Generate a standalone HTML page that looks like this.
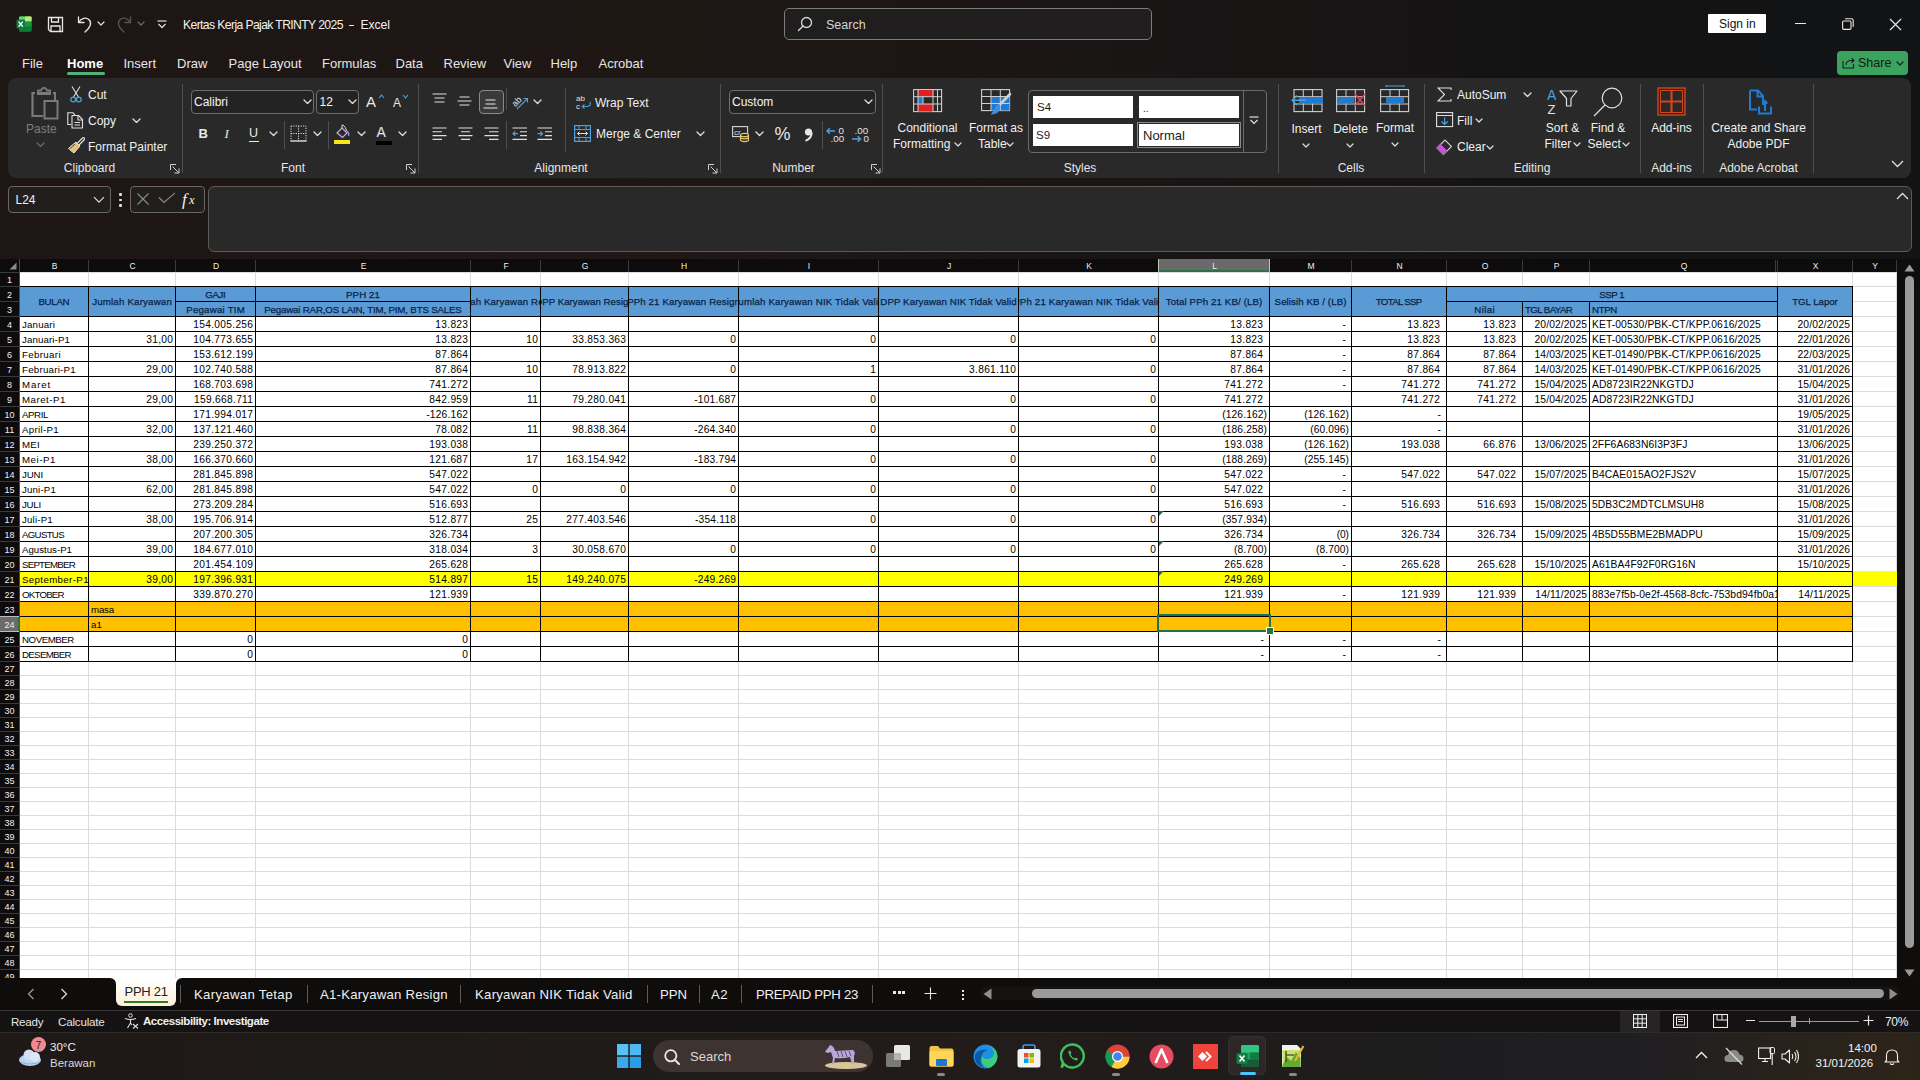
<!DOCTYPE html><html><head><meta charset="utf-8"><style>
*{box-sizing:content-box}
body{margin:0;width:1920px;height:1080px;overflow:hidden;position:relative;background:#1c1817;font-family:"Liberation Sans",sans-serif;}
.c{position:absolute;display:flex;align-items:flex-end;overflow:hidden;white-space:nowrap;font-size:9.7px;line-height:13px;letter-spacing:.5px}
.c span{display:block;flex:none}
.ch{position:absolute;top:259px;height:13px;line-height:14px;font-size:8.5px;color:#f0f0f0;text-align:center}
.rh{position:absolute;left:0;width:19px;font-size:9px;color:#f0f0f0;text-align:center;overflow:hidden}
.a{position:absolute;white-space:nowrap}
</style></head><body>
<div style="position:absolute;left:20px;top:272px;width:1877px;height:706px;background:#fff"></div>
<div style="position:absolute;left:19px;top:286px;width:1834px;height:30px;background:#5b9bd5"></div>
<div style="position:absolute;left:19px;top:571px;width:1878px;height:15px;background:#ffff00"></div>
<div style="position:absolute;left:19px;top:601px;width:1834px;height:30px;background:#ffc000"></div>
<div style="position:absolute;left:88px;top:272px;width:1px;height:706px;background:#dcdcdc"></div>
<div style="position:absolute;left:175px;top:272px;width:1px;height:706px;background:#dcdcdc"></div>
<div style="position:absolute;left:255px;top:272px;width:1px;height:706px;background:#dcdcdc"></div>
<div style="position:absolute;left:470px;top:272px;width:1px;height:706px;background:#dcdcdc"></div>
<div style="position:absolute;left:540px;top:272px;width:1px;height:706px;background:#dcdcdc"></div>
<div style="position:absolute;left:628px;top:272px;width:1px;height:706px;background:#dcdcdc"></div>
<div style="position:absolute;left:738px;top:272px;width:1px;height:706px;background:#dcdcdc"></div>
<div style="position:absolute;left:878px;top:272px;width:1px;height:706px;background:#dcdcdc"></div>
<div style="position:absolute;left:1018px;top:272px;width:1px;height:706px;background:#dcdcdc"></div>
<div style="position:absolute;left:1158px;top:272px;width:1px;height:706px;background:#dcdcdc"></div>
<div style="position:absolute;left:1269px;top:272px;width:1px;height:706px;background:#dcdcdc"></div>
<div style="position:absolute;left:1351px;top:272px;width:1px;height:706px;background:#dcdcdc"></div>
<div style="position:absolute;left:1446px;top:272px;width:1px;height:706px;background:#dcdcdc"></div>
<div style="position:absolute;left:1522px;top:272px;width:1px;height:706px;background:#dcdcdc"></div>
<div style="position:absolute;left:1589px;top:272px;width:1px;height:706px;background:#dcdcdc"></div>
<div style="position:absolute;left:1777px;top:272px;width:1px;height:706px;background:#dcdcdc"></div>
<div style="position:absolute;left:1852px;top:272px;width:1px;height:706px;background:#dcdcdc"></div>
<div style="position:absolute;left:1896px;top:272px;width:1px;height:706px;background:#dcdcdc"></div>
<div style="position:absolute;left:20px;top:272px;width:1877px;height:1px;background:#dcdcdc"></div>
<div style="position:absolute;left:20px;top:286px;width:1877px;height:1px;background:#dcdcdc"></div>
<div style="position:absolute;left:20px;top:301px;width:1877px;height:1px;background:#dcdcdc"></div>
<div style="position:absolute;left:20px;top:316px;width:1877px;height:1px;background:#dcdcdc"></div>
<div style="position:absolute;left:20px;top:331px;width:1877px;height:1px;background:#dcdcdc"></div>
<div style="position:absolute;left:20px;top:346px;width:1877px;height:1px;background:#dcdcdc"></div>
<div style="position:absolute;left:20px;top:361px;width:1877px;height:1px;background:#dcdcdc"></div>
<div style="position:absolute;left:20px;top:376px;width:1877px;height:1px;background:#dcdcdc"></div>
<div style="position:absolute;left:20px;top:391px;width:1877px;height:1px;background:#dcdcdc"></div>
<div style="position:absolute;left:20px;top:406px;width:1877px;height:1px;background:#dcdcdc"></div>
<div style="position:absolute;left:20px;top:421px;width:1877px;height:1px;background:#dcdcdc"></div>
<div style="position:absolute;left:20px;top:436px;width:1877px;height:1px;background:#dcdcdc"></div>
<div style="position:absolute;left:20px;top:451px;width:1877px;height:1px;background:#dcdcdc"></div>
<div style="position:absolute;left:20px;top:466px;width:1877px;height:1px;background:#dcdcdc"></div>
<div style="position:absolute;left:20px;top:481px;width:1877px;height:1px;background:#dcdcdc"></div>
<div style="position:absolute;left:20px;top:496px;width:1877px;height:1px;background:#dcdcdc"></div>
<div style="position:absolute;left:20px;top:511px;width:1877px;height:1px;background:#dcdcdc"></div>
<div style="position:absolute;left:20px;top:526px;width:1877px;height:1px;background:#dcdcdc"></div>
<div style="position:absolute;left:20px;top:541px;width:1877px;height:1px;background:#dcdcdc"></div>
<div style="position:absolute;left:20px;top:556px;width:1877px;height:1px;background:#dcdcdc"></div>
<div style="position:absolute;left:20px;top:571px;width:1877px;height:1px;background:#dcdcdc"></div>
<div style="position:absolute;left:20px;top:586px;width:1877px;height:1px;background:#dcdcdc"></div>
<div style="position:absolute;left:20px;top:601px;width:1877px;height:1px;background:#dcdcdc"></div>
<div style="position:absolute;left:20px;top:616px;width:1877px;height:1px;background:#dcdcdc"></div>
<div style="position:absolute;left:20px;top:631px;width:1877px;height:1px;background:#dcdcdc"></div>
<div style="position:absolute;left:20px;top:646px;width:1877px;height:1px;background:#dcdcdc"></div>
<div style="position:absolute;left:20px;top:661px;width:1877px;height:1px;background:#dcdcdc"></div>
<div style="position:absolute;left:20px;top:675px;width:1877px;height:1px;background:#dcdcdc"></div>
<div style="position:absolute;left:20px;top:689px;width:1877px;height:1px;background:#dcdcdc"></div>
<div style="position:absolute;left:20px;top:703px;width:1877px;height:1px;background:#dcdcdc"></div>
<div style="position:absolute;left:20px;top:717px;width:1877px;height:1px;background:#dcdcdc"></div>
<div style="position:absolute;left:20px;top:731px;width:1877px;height:1px;background:#dcdcdc"></div>
<div style="position:absolute;left:20px;top:745px;width:1877px;height:1px;background:#dcdcdc"></div>
<div style="position:absolute;left:20px;top:759px;width:1877px;height:1px;background:#dcdcdc"></div>
<div style="position:absolute;left:20px;top:773px;width:1877px;height:1px;background:#dcdcdc"></div>
<div style="position:absolute;left:20px;top:787px;width:1877px;height:1px;background:#dcdcdc"></div>
<div style="position:absolute;left:20px;top:801px;width:1877px;height:1px;background:#dcdcdc"></div>
<div style="position:absolute;left:20px;top:815px;width:1877px;height:1px;background:#dcdcdc"></div>
<div style="position:absolute;left:20px;top:829px;width:1877px;height:1px;background:#dcdcdc"></div>
<div style="position:absolute;left:20px;top:843px;width:1877px;height:1px;background:#dcdcdc"></div>
<div style="position:absolute;left:20px;top:857px;width:1877px;height:1px;background:#dcdcdc"></div>
<div style="position:absolute;left:20px;top:871px;width:1877px;height:1px;background:#dcdcdc"></div>
<div style="position:absolute;left:20px;top:885px;width:1877px;height:1px;background:#dcdcdc"></div>
<div style="position:absolute;left:20px;top:899px;width:1877px;height:1px;background:#dcdcdc"></div>
<div style="position:absolute;left:20px;top:913px;width:1877px;height:1px;background:#dcdcdc"></div>
<div style="position:absolute;left:20px;top:927px;width:1877px;height:1px;background:#dcdcdc"></div>
<div style="position:absolute;left:20px;top:941px;width:1877px;height:1px;background:#dcdcdc"></div>
<div style="position:absolute;left:20px;top:955px;width:1877px;height:1px;background:#dcdcdc"></div>
<div style="position:absolute;left:20px;top:969px;width:1877px;height:1px;background:#dcdcdc"></div>
<div style="position:absolute;left:19px;top:286px;width:1834px;height:30px;background:#5b9bd5"></div>
<div style="position:absolute;left:19px;top:571px;width:1878px;height:15px;background:#ffff00"></div>
<div style="position:absolute;left:19px;top:601px;width:1834px;height:30px;background:#ffc000"></div>
<div style="position:absolute;left:19px;top:286px;width:1834px;height:1px;background:#000"></div>
<div style="position:absolute;left:175px;top:301px;width:296px;height:1px;background:#000"></div>
<div style="position:absolute;left:1446px;top:301px;width:332px;height:1px;background:#000"></div>
<div style="position:absolute;left:19px;top:316px;width:1834px;height:1px;background:#000"></div>
<div style="position:absolute;left:19px;top:331px;width:1834px;height:1px;background:#000"></div>
<div style="position:absolute;left:19px;top:346px;width:1834px;height:1px;background:#000"></div>
<div style="position:absolute;left:19px;top:361px;width:1834px;height:1px;background:#000"></div>
<div style="position:absolute;left:19px;top:376px;width:1834px;height:1px;background:#000"></div>
<div style="position:absolute;left:19px;top:391px;width:1834px;height:1px;background:#000"></div>
<div style="position:absolute;left:19px;top:406px;width:1834px;height:1px;background:#000"></div>
<div style="position:absolute;left:19px;top:421px;width:1834px;height:1px;background:#000"></div>
<div style="position:absolute;left:19px;top:436px;width:1834px;height:1px;background:#000"></div>
<div style="position:absolute;left:19px;top:451px;width:1834px;height:1px;background:#000"></div>
<div style="position:absolute;left:19px;top:466px;width:1834px;height:1px;background:#000"></div>
<div style="position:absolute;left:19px;top:481px;width:1834px;height:1px;background:#000"></div>
<div style="position:absolute;left:19px;top:496px;width:1834px;height:1px;background:#000"></div>
<div style="position:absolute;left:19px;top:511px;width:1834px;height:1px;background:#000"></div>
<div style="position:absolute;left:19px;top:526px;width:1834px;height:1px;background:#000"></div>
<div style="position:absolute;left:19px;top:541px;width:1834px;height:1px;background:#000"></div>
<div style="position:absolute;left:19px;top:556px;width:1834px;height:1px;background:#000"></div>
<div style="position:absolute;left:19px;top:571px;width:1834px;height:1px;background:#000"></div>
<div style="position:absolute;left:19px;top:586px;width:1834px;height:1px;background:#000"></div>
<div style="position:absolute;left:19px;top:601px;width:1834px;height:1px;background:#000"></div>
<div style="position:absolute;left:19px;top:616px;width:1834px;height:1px;background:#000"></div>
<div style="position:absolute;left:19px;top:631px;width:1834px;height:1px;background:#000"></div>
<div style="position:absolute;left:19px;top:646px;width:1834px;height:1px;background:#000"></div>
<div style="position:absolute;left:19px;top:661px;width:1834px;height:1px;background:#000"></div>
<div style="position:absolute;left:88px;top:286px;width:1px;height:376px;background:#000"></div>
<div style="position:absolute;left:175px;top:286px;width:1px;height:376px;background:#000"></div>
<div style="position:absolute;left:255px;top:286px;width:1px;height:376px;background:#000"></div>
<div style="position:absolute;left:470px;top:286px;width:1px;height:376px;background:#000"></div>
<div style="position:absolute;left:540px;top:286px;width:1px;height:376px;background:#000"></div>
<div style="position:absolute;left:628px;top:286px;width:1px;height:376px;background:#000"></div>
<div style="position:absolute;left:738px;top:286px;width:1px;height:376px;background:#000"></div>
<div style="position:absolute;left:878px;top:286px;width:1px;height:376px;background:#000"></div>
<div style="position:absolute;left:1018px;top:286px;width:1px;height:376px;background:#000"></div>
<div style="position:absolute;left:1158px;top:286px;width:1px;height:376px;background:#000"></div>
<div style="position:absolute;left:1269px;top:286px;width:1px;height:376px;background:#000"></div>
<div style="position:absolute;left:1351px;top:286px;width:1px;height:376px;background:#000"></div>
<div style="position:absolute;left:1446px;top:286px;width:1px;height:376px;background:#000"></div>
<div style="position:absolute;left:1522px;top:301px;width:1px;height:361px;background:#000"></div>
<div style="position:absolute;left:1589px;top:301px;width:1px;height:361px;background:#000"></div>
<div style="position:absolute;left:1777px;top:286px;width:1px;height:376px;background:#000"></div>
<div style="position:absolute;left:1852px;top:286px;width:1px;height:376px;background:#000"></div>
<div style="position:absolute;left:19px;top:286px;width:1px;height:376px;background:#000"></div>
<div class="c" style="left:20px;top:287px;width:68px;height:29px;justify-content:center;color:#0a1f46;align-items:center;-webkit-text-stroke:0.25px #0a1f46"><span style="letter-spacing:-0.27px;margin-right:0.27px">BULAN</span></div>
<div class="c" style="left:89px;top:287px;width:86px;height:29px;justify-content:center;color:#0a1f46;align-items:center;-webkit-text-stroke:0.25px #0a1f46"><span style="letter-spacing:0.19px;margin-right:-0.19px">Jumlah Karyawan</span></div>
<div class="c" style="left:176px;top:287px;width:79px;height:14px;justify-content:center;color:#0a1f46;align-items:center;-webkit-text-stroke:0.25px #0a1f46"><span style="letter-spacing:-0.39px;margin-right:0.39px">GAJI</span></div>
<div class="c" style="left:176px;top:302px;width:79px;height:14px;justify-content:center;color:#0a1f46;align-items:center;-webkit-text-stroke:0.25px #0a1f46"><span style="letter-spacing:0.22px;margin-right:-0.22px">Pegawai TIM</span></div>
<div class="c" style="left:256px;top:287px;width:214px;height:14px;justify-content:center;color:#0a1f46;align-items:center;-webkit-text-stroke:0.25px #0a1f46"><span style="letter-spacing:0.10px;margin-right:-0.10px">PPH 21</span></div>
<div class="c" style="left:256px;top:302px;width:214px;height:14px;justify-content:center;color:#0a1f46;align-items:center;-webkit-text-stroke:0.25px #0a1f46"><span style="letter-spacing:-0.16px;margin-right:0.16px">Pegawai RAR,OS LAIN, TIM, PIM, BTS SALES</span></div>
<div class="c" style="left:471px;top:287px;width:69px;height:29px;justify-content:center;color:#0a1f46;align-items:center;-webkit-text-stroke:0.25px #0a1f46"><span style="letter-spacing:0.14px;margin-right:-0.14px">Jumlah Karyawan Resign</span></div>
<div class="c" style="left:541px;top:287px;width:87px;height:29px;justify-content:center;color:#0a1f46;align-items:center;-webkit-text-stroke:0.25px #0a1f46"><span style="letter-spacing:0.02px;margin-right:-0.02px">DPP Karyawan Resign</span></div>
<div class="c" style="left:629px;top:287px;width:109px;height:29px;justify-content:center;color:#0a1f46;align-items:center;-webkit-text-stroke:0.25px #0a1f46"><span style="letter-spacing:0.11px;margin-right:-0.11px">PPh 21 Karyawan Resign</span></div>
<div class="c" style="left:739px;top:287px;width:139px;height:29px;justify-content:center;color:#0a1f46;align-items:center;-webkit-text-stroke:0.25px #0a1f46"><span style="letter-spacing:0.17px;margin-right:-0.17px">Jumlah Karyawan NIK Tidak Valid</span></div>
<div class="c" style="left:879px;top:287px;width:139px;height:29px;justify-content:center;color:#0a1f46;align-items:center;-webkit-text-stroke:0.25px #0a1f46"><span style="letter-spacing:0.10px;margin-right:-0.10px">DPP Karyawan NIK Tidak Valid</span></div>
<div class="c" style="left:1019px;top:287px;width:139px;height:29px;justify-content:center;color:#0a1f46;align-items:center;-webkit-text-stroke:0.25px #0a1f46"><span style="letter-spacing:0.16px;margin-right:-0.16px">PPh 21 Karyawan NIK Tidak Valid</span></div>
<div class="c" style="left:1159px;top:287px;width:110px;height:29px;justify-content:center;color:#0a1f46;align-items:center;-webkit-text-stroke:0.25px #0a1f46"><span style="letter-spacing:0.12px;margin-right:-0.12px">Total PPh 21 KB/ (LB)</span></div>
<div class="c" style="left:1270px;top:287px;width:81px;height:29px;justify-content:center;color:#0a1f46;align-items:center;-webkit-text-stroke:0.25px #0a1f46"><span style="letter-spacing:0.08px;margin-right:-0.08px">Selisih KB / (LB)</span></div>
<div class="c" style="left:1352px;top:287px;width:94px;height:29px;justify-content:center;color:#0a1f46;align-items:center;-webkit-text-stroke:0.25px #0a1f46"><span style="letter-spacing:-0.71px;margin-right:0.71px">TOTAL SSP</span></div>
<div class="c" style="left:1447px;top:287px;width:330px;height:14px;justify-content:center;color:#0a1f46;align-items:center;-webkit-text-stroke:0.25px #0a1f46"><span style="letter-spacing:-0.50px;margin-right:0.50px">SSP 1</span></div>
<div class="c" style="left:1447px;top:302px;width:75px;height:14px;justify-content:center;color:#0a1f46;align-items:center;-webkit-text-stroke:0.25px #0a1f46"><span style="letter-spacing:0.43px;margin-right:-0.43px">Nilai</span></div>
<div class="c" style="left:1523px;top:302px;width:64px;height:14px;justify-content:flex-start;padding-left:2px;color:#0a1f46;align-items:center;-webkit-text-stroke:0.25px #0a1f46"><span style="letter-spacing:-0.60px;margin-right:0.60px">TGL BAYAR</span></div>
<div class="c" style="left:1590px;top:302px;width:185px;height:14px;justify-content:flex-start;padding-left:2px;color:#0a1f46;align-items:center;-webkit-text-stroke:0.25px #0a1f46"><span style="letter-spacing:-0.35px;margin-right:0.35px">NTPN</span></div>
<div class="c" style="left:1778px;top:287px;width:74px;height:29px;justify-content:center;color:#0a1f46;align-items:center;-webkit-text-stroke:0.25px #0a1f46"><span style="letter-spacing:-0.04px;margin-right:0.04px">TGL Lapor</span></div>
<div class="c" style="left:20px;top:317px;width:66px;height:14px;justify-content:flex-start;padding-left:2px;color:#000"><span style="letter-spacing:0.17px;margin-right:-0.17px">Januari</span></div>
<div class="c" style="left:176px;top:317px;width:77px;height:14px;justify-content:flex-end;padding-right:2px;color:#000;font-size:10.2px"><span style="letter-spacing:0.30px;margin-right:-0.30px">154.005.256</span></div>
<div class="c" style="left:256px;top:317px;width:212px;height:14px;justify-content:flex-end;padding-right:2px;color:#000;font-size:10.2px"><span style="letter-spacing:0.30px;margin-right:-0.30px">13.823</span></div>
<div class="c" style="left:1159px;top:317px;width:104px;height:14px;justify-content:flex-end;padding-right:6px;color:#000;font-size:10.2px"><span style="letter-spacing:0.30px;margin-right:-0.30px">13.823</span></div>
<div class="c" style="left:1270px;top:317px;width:76px;height:14px;justify-content:flex-end;padding-right:5px;color:#000;font-size:10.2px"><span style="letter-spacing:-0.40px;margin-right:0.40px">-</span></div>
<div class="c" style="left:1352px;top:317px;width:88px;height:14px;justify-content:flex-end;padding-right:6px;color:#000;font-size:10.2px"><span style="letter-spacing:0.30px;margin-right:-0.30px">13.823</span></div>
<div class="c" style="left:1447px;top:317px;width:69px;height:14px;justify-content:flex-end;padding-right:6px;color:#000;font-size:10.2px"><span style="letter-spacing:0.30px;margin-right:-0.30px">13.823</span></div>
<div class="c" style="left:1523px;top:317px;width:64px;height:14px;justify-content:flex-end;padding-right:2px;color:#000;font-size:10.3px"><span style="letter-spacing:0.10px;margin-right:-0.10px">20/02/2025</span></div>
<div class="c" style="left:1590px;top:317px;width:185px;height:14px;justify-content:flex-start;padding-left:2px;color:#000;font-size:10.3px"><span style="letter-spacing:0.10px;margin-right:-0.10px">KET-00530/PBK-CT/KPP.0616/2025</span></div>
<div class="c" style="left:1778px;top:317px;width:72px;height:14px;justify-content:flex-end;padding-right:2px;color:#000;font-size:10.3px"><span style="letter-spacing:0.10px;margin-right:-0.10px">20/02/2025</span></div>
<div class="c" style="left:20px;top:332px;width:66px;height:14px;justify-content:flex-start;padding-left:2px;color:#000"><span style="letter-spacing:0.11px;margin-right:-0.11px">Januari-P1</span></div>
<div class="c" style="left:89px;top:332px;width:84px;height:14px;justify-content:flex-end;padding-right:2px;color:#000;font-size:10.2px"><span style="letter-spacing:0.30px;margin-right:-0.30px">31,00</span></div>
<div class="c" style="left:176px;top:332px;width:77px;height:14px;justify-content:flex-end;padding-right:2px;color:#000;font-size:10.2px"><span style="letter-spacing:0.30px;margin-right:-0.30px">104.773.655</span></div>
<div class="c" style="left:256px;top:332px;width:212px;height:14px;justify-content:flex-end;padding-right:2px;color:#000;font-size:10.2px"><span style="letter-spacing:0.30px;margin-right:-0.30px">13.823</span></div>
<div class="c" style="left:471px;top:332px;width:67px;height:14px;justify-content:flex-end;padding-right:2px;color:#000;font-size:10.2px"><span style="letter-spacing:0.33px;margin-right:-0.33px">10</span></div>
<div class="c" style="left:541px;top:332px;width:85px;height:14px;justify-content:flex-end;padding-right:2px;color:#000;font-size:10.2px"><span style="letter-spacing:0.30px;margin-right:-0.30px">33.853.363</span></div>
<div class="c" style="left:629px;top:332px;width:107px;height:14px;justify-content:flex-end;padding-right:2px;color:#000;font-size:10.2px"><span style="letter-spacing:0.33px;margin-right:-0.33px">0</span></div>
<div class="c" style="left:739px;top:332px;width:137px;height:14px;justify-content:flex-end;padding-right:2px;color:#000;font-size:10.2px"><span style="letter-spacing:0.33px;margin-right:-0.33px">0</span></div>
<div class="c" style="left:879px;top:332px;width:137px;height:14px;justify-content:flex-end;padding-right:2px;color:#000;font-size:10.2px"><span style="letter-spacing:0.33px;margin-right:-0.33px">0</span></div>
<div class="c" style="left:1019px;top:332px;width:137px;height:14px;justify-content:flex-end;padding-right:2px;color:#000;font-size:10.2px"><span style="letter-spacing:0.33px;margin-right:-0.33px">0</span></div>
<div class="c" style="left:1159px;top:332px;width:104px;height:14px;justify-content:flex-end;padding-right:6px;color:#000;font-size:10.2px"><span style="letter-spacing:0.30px;margin-right:-0.30px">13.823</span></div>
<div class="c" style="left:1270px;top:332px;width:76px;height:14px;justify-content:flex-end;padding-right:5px;color:#000;font-size:10.2px"><span style="letter-spacing:-0.40px;margin-right:0.40px">-</span></div>
<div class="c" style="left:1352px;top:332px;width:88px;height:14px;justify-content:flex-end;padding-right:6px;color:#000;font-size:10.2px"><span style="letter-spacing:0.30px;margin-right:-0.30px">13.823</span></div>
<div class="c" style="left:1447px;top:332px;width:69px;height:14px;justify-content:flex-end;padding-right:6px;color:#000;font-size:10.2px"><span style="letter-spacing:0.30px;margin-right:-0.30px">13.823</span></div>
<div class="c" style="left:1523px;top:332px;width:64px;height:14px;justify-content:flex-end;padding-right:2px;color:#000;font-size:10.3px"><span style="letter-spacing:0.10px;margin-right:-0.10px">20/02/2025</span></div>
<div class="c" style="left:1590px;top:332px;width:185px;height:14px;justify-content:flex-start;padding-left:2px;color:#000;font-size:10.3px"><span style="letter-spacing:0.10px;margin-right:-0.10px">KET-00530/PBK-CT/KPP.0616/2025</span></div>
<div class="c" style="left:1778px;top:332px;width:72px;height:14px;justify-content:flex-end;padding-right:2px;color:#000;font-size:10.3px"><span style="letter-spacing:0.10px;margin-right:-0.10px">22/01/2026</span></div>
<div class="c" style="left:20px;top:347px;width:66px;height:14px;justify-content:flex-start;padding-left:2px;color:#000"><span style="letter-spacing:0.36px;margin-right:-0.36px">Februari</span></div>
<div class="c" style="left:176px;top:347px;width:77px;height:14px;justify-content:flex-end;padding-right:2px;color:#000;font-size:10.2px"><span style="letter-spacing:0.30px;margin-right:-0.30px">153.612.199</span></div>
<div class="c" style="left:256px;top:347px;width:212px;height:14px;justify-content:flex-end;padding-right:2px;color:#000;font-size:10.2px"><span style="letter-spacing:0.30px;margin-right:-0.30px">87.864</span></div>
<div class="c" style="left:1159px;top:347px;width:104px;height:14px;justify-content:flex-end;padding-right:6px;color:#000;font-size:10.2px"><span style="letter-spacing:0.30px;margin-right:-0.30px">87.864</span></div>
<div class="c" style="left:1270px;top:347px;width:76px;height:14px;justify-content:flex-end;padding-right:5px;color:#000;font-size:10.2px"><span style="letter-spacing:-0.40px;margin-right:0.40px">-</span></div>
<div class="c" style="left:1352px;top:347px;width:88px;height:14px;justify-content:flex-end;padding-right:6px;color:#000;font-size:10.2px"><span style="letter-spacing:0.30px;margin-right:-0.30px">87.864</span></div>
<div class="c" style="left:1447px;top:347px;width:69px;height:14px;justify-content:flex-end;padding-right:6px;color:#000;font-size:10.2px"><span style="letter-spacing:0.30px;margin-right:-0.30px">87.864</span></div>
<div class="c" style="left:1523px;top:347px;width:64px;height:14px;justify-content:flex-end;padding-right:2px;color:#000;font-size:10.3px"><span style="letter-spacing:0.10px;margin-right:-0.10px">14/03/2025</span></div>
<div class="c" style="left:1590px;top:347px;width:185px;height:14px;justify-content:flex-start;padding-left:2px;color:#000;font-size:10.3px"><span style="letter-spacing:0.10px;margin-right:-0.10px">KET-01490/PBK-CT/KPP.0616/2025</span></div>
<div class="c" style="left:1778px;top:347px;width:72px;height:14px;justify-content:flex-end;padding-right:2px;color:#000;font-size:10.3px"><span style="letter-spacing:0.10px;margin-right:-0.10px">22/03/2025</span></div>
<div class="c" style="left:20px;top:362px;width:66px;height:14px;justify-content:flex-start;padding-left:2px;color:#000"><span style="letter-spacing:0.25px;margin-right:-0.25px">Februari-P1</span></div>
<div class="c" style="left:89px;top:362px;width:84px;height:14px;justify-content:flex-end;padding-right:2px;color:#000;font-size:10.2px"><span style="letter-spacing:0.30px;margin-right:-0.30px">29,00</span></div>
<div class="c" style="left:176px;top:362px;width:77px;height:14px;justify-content:flex-end;padding-right:2px;color:#000;font-size:10.2px"><span style="letter-spacing:0.30px;margin-right:-0.30px">102.740.588</span></div>
<div class="c" style="left:256px;top:362px;width:212px;height:14px;justify-content:flex-end;padding-right:2px;color:#000;font-size:10.2px"><span style="letter-spacing:0.30px;margin-right:-0.30px">87.864</span></div>
<div class="c" style="left:471px;top:362px;width:67px;height:14px;justify-content:flex-end;padding-right:2px;color:#000;font-size:10.2px"><span style="letter-spacing:0.33px;margin-right:-0.33px">10</span></div>
<div class="c" style="left:541px;top:362px;width:85px;height:14px;justify-content:flex-end;padding-right:2px;color:#000;font-size:10.2px"><span style="letter-spacing:0.30px;margin-right:-0.30px">78.913.822</span></div>
<div class="c" style="left:629px;top:362px;width:107px;height:14px;justify-content:flex-end;padding-right:2px;color:#000;font-size:10.2px"><span style="letter-spacing:0.33px;margin-right:-0.33px">0</span></div>
<div class="c" style="left:739px;top:362px;width:137px;height:14px;justify-content:flex-end;padding-right:2px;color:#000;font-size:10.2px"><span style="letter-spacing:0.33px;margin-right:-0.33px">1</span></div>
<div class="c" style="left:879px;top:362px;width:137px;height:14px;justify-content:flex-end;padding-right:2px;color:#000;font-size:10.2px"><span style="letter-spacing:0.29px;margin-right:-0.29px">3.861.110</span></div>
<div class="c" style="left:1019px;top:362px;width:137px;height:14px;justify-content:flex-end;padding-right:2px;color:#000;font-size:10.2px"><span style="letter-spacing:0.33px;margin-right:-0.33px">0</span></div>
<div class="c" style="left:1159px;top:362px;width:104px;height:14px;justify-content:flex-end;padding-right:6px;color:#000;font-size:10.2px"><span style="letter-spacing:0.30px;margin-right:-0.30px">87.864</span></div>
<div class="c" style="left:1270px;top:362px;width:76px;height:14px;justify-content:flex-end;padding-right:5px;color:#000;font-size:10.2px"><span style="letter-spacing:-0.40px;margin-right:0.40px">-</span></div>
<div class="c" style="left:1352px;top:362px;width:88px;height:14px;justify-content:flex-end;padding-right:6px;color:#000;font-size:10.2px"><span style="letter-spacing:0.30px;margin-right:-0.30px">87.864</span></div>
<div class="c" style="left:1447px;top:362px;width:69px;height:14px;justify-content:flex-end;padding-right:6px;color:#000;font-size:10.2px"><span style="letter-spacing:0.30px;margin-right:-0.30px">87.864</span></div>
<div class="c" style="left:1523px;top:362px;width:64px;height:14px;justify-content:flex-end;padding-right:2px;color:#000;font-size:10.3px"><span style="letter-spacing:0.10px;margin-right:-0.10px">14/03/2025</span></div>
<div class="c" style="left:1590px;top:362px;width:185px;height:14px;justify-content:flex-start;padding-left:2px;color:#000;font-size:10.3px"><span style="letter-spacing:0.10px;margin-right:-0.10px">KET-01490/PBK-CT/KPP.0616/2025</span></div>
<div class="c" style="left:1778px;top:362px;width:72px;height:14px;justify-content:flex-end;padding-right:2px;color:#000;font-size:10.3px"><span style="letter-spacing:0.10px;margin-right:-0.10px">31/01/2026</span></div>
<div class="c" style="left:20px;top:377px;width:66px;height:14px;justify-content:flex-start;padding-left:2px;color:#000"><span style="letter-spacing:0.84px;margin-right:-0.84px">Maret</span></div>
<div class="c" style="left:176px;top:377px;width:77px;height:14px;justify-content:flex-end;padding-right:2px;color:#000;font-size:10.2px"><span style="letter-spacing:0.30px;margin-right:-0.30px">168.703.698</span></div>
<div class="c" style="left:256px;top:377px;width:212px;height:14px;justify-content:flex-end;padding-right:2px;color:#000;font-size:10.2px"><span style="letter-spacing:0.30px;margin-right:-0.30px">741.272</span></div>
<div class="c" style="left:1159px;top:377px;width:104px;height:14px;justify-content:flex-end;padding-right:6px;color:#000;font-size:10.2px"><span style="letter-spacing:0.30px;margin-right:-0.30px">741.272</span></div>
<div class="c" style="left:1270px;top:377px;width:76px;height:14px;justify-content:flex-end;padding-right:5px;color:#000;font-size:10.2px"><span style="letter-spacing:-0.40px;margin-right:0.40px">-</span></div>
<div class="c" style="left:1352px;top:377px;width:88px;height:14px;justify-content:flex-end;padding-right:6px;color:#000;font-size:10.2px"><span style="letter-spacing:0.30px;margin-right:-0.30px">741.272</span></div>
<div class="c" style="left:1447px;top:377px;width:69px;height:14px;justify-content:flex-end;padding-right:6px;color:#000;font-size:10.2px"><span style="letter-spacing:0.30px;margin-right:-0.30px">741.272</span></div>
<div class="c" style="left:1523px;top:377px;width:64px;height:14px;justify-content:flex-end;padding-right:2px;color:#000;font-size:10.3px"><span style="letter-spacing:0.10px;margin-right:-0.10px">15/04/2025</span></div>
<div class="c" style="left:1590px;top:377px;width:185px;height:14px;justify-content:flex-start;padding-left:2px;color:#000;font-size:10.3px"><span style="letter-spacing:0.10px;margin-right:-0.10px">AD8723IR22NKGTDJ</span></div>
<div class="c" style="left:1778px;top:377px;width:72px;height:14px;justify-content:flex-end;padding-right:2px;color:#000;font-size:10.3px"><span style="letter-spacing:0.10px;margin-right:-0.10px">15/04/2025</span></div>
<div class="c" style="left:20px;top:392px;width:66px;height:14px;justify-content:flex-start;padding-left:2px;color:#000"><span style="letter-spacing:0.51px;margin-right:-0.51px">Maret-P1</span></div>
<div class="c" style="left:89px;top:392px;width:84px;height:14px;justify-content:flex-end;padding-right:2px;color:#000;font-size:10.2px"><span style="letter-spacing:0.30px;margin-right:-0.30px">29,00</span></div>
<div class="c" style="left:176px;top:392px;width:77px;height:14px;justify-content:flex-end;padding-right:2px;color:#000;font-size:10.2px"><span style="letter-spacing:0.30px;margin-right:-0.30px">159.668.711</span></div>
<div class="c" style="left:256px;top:392px;width:212px;height:14px;justify-content:flex-end;padding-right:2px;color:#000;font-size:10.2px"><span style="letter-spacing:0.30px;margin-right:-0.30px">842.959</span></div>
<div class="c" style="left:471px;top:392px;width:67px;height:14px;justify-content:flex-end;padding-right:2px;color:#000;font-size:10.2px"><span style="letter-spacing:0.33px;margin-right:-0.33px">11</span></div>
<div class="c" style="left:541px;top:392px;width:85px;height:14px;justify-content:flex-end;padding-right:2px;color:#000;font-size:10.2px"><span style="letter-spacing:0.30px;margin-right:-0.30px">79.280.041</span></div>
<div class="c" style="left:629px;top:392px;width:107px;height:14px;justify-content:flex-end;padding-right:2px;color:#000;font-size:10.2px"><span style="letter-spacing:0.22px;margin-right:-0.22px">-101.687</span></div>
<div class="c" style="left:739px;top:392px;width:137px;height:14px;justify-content:flex-end;padding-right:2px;color:#000;font-size:10.2px"><span style="letter-spacing:0.33px;margin-right:-0.33px">0</span></div>
<div class="c" style="left:879px;top:392px;width:137px;height:14px;justify-content:flex-end;padding-right:2px;color:#000;font-size:10.2px"><span style="letter-spacing:0.33px;margin-right:-0.33px">0</span></div>
<div class="c" style="left:1019px;top:392px;width:137px;height:14px;justify-content:flex-end;padding-right:2px;color:#000;font-size:10.2px"><span style="letter-spacing:0.33px;margin-right:-0.33px">0</span></div>
<div class="c" style="left:1159px;top:392px;width:104px;height:14px;justify-content:flex-end;padding-right:6px;color:#000;font-size:10.2px"><span style="letter-spacing:0.30px;margin-right:-0.30px">741.272</span></div>
<div class="c" style="left:1352px;top:392px;width:88px;height:14px;justify-content:flex-end;padding-right:6px;color:#000;font-size:10.2px"><span style="letter-spacing:0.30px;margin-right:-0.30px">741.272</span></div>
<div class="c" style="left:1447px;top:392px;width:69px;height:14px;justify-content:flex-end;padding-right:6px;color:#000;font-size:10.2px"><span style="letter-spacing:0.30px;margin-right:-0.30px">741.272</span></div>
<div class="c" style="left:1523px;top:392px;width:64px;height:14px;justify-content:flex-end;padding-right:2px;color:#000;font-size:10.3px"><span style="letter-spacing:0.10px;margin-right:-0.10px">15/04/2025</span></div>
<div class="c" style="left:1590px;top:392px;width:185px;height:14px;justify-content:flex-start;padding-left:2px;color:#000;font-size:10.3px"><span style="letter-spacing:0.10px;margin-right:-0.10px">AD8723IR22NKGTDJ</span></div>
<div class="c" style="left:1778px;top:392px;width:72px;height:14px;justify-content:flex-end;padding-right:2px;color:#000;font-size:10.3px"><span style="letter-spacing:0.10px;margin-right:-0.10px">31/01/2026</span></div>
<div class="c" style="left:20px;top:407px;width:66px;height:14px;justify-content:flex-start;padding-left:2px;color:#000"><span style="letter-spacing:-0.41px;margin-right:0.41px">APRIL</span></div>
<div class="c" style="left:176px;top:407px;width:77px;height:14px;justify-content:flex-end;padding-right:2px;color:#000;font-size:10.2px"><span style="letter-spacing:0.30px;margin-right:-0.30px">171.994.017</span></div>
<div class="c" style="left:256px;top:407px;width:212px;height:14px;justify-content:flex-end;padding-right:2px;color:#000;font-size:10.2px"><span style="letter-spacing:0.22px;margin-right:-0.22px">-126.162</span></div>
<div class="c" style="left:1159px;top:407px;width:108px;height:14px;justify-content:flex-end;padding-right:2px;color:#000;font-size:10.2px"><span style="letter-spacing:0.15px;margin-right:-0.15px">(126.162)</span></div>
<div class="c" style="left:1270px;top:407px;width:79px;height:14px;justify-content:flex-end;padding-right:2px;color:#000;font-size:10.2px"><span style="letter-spacing:0.15px;margin-right:-0.15px">(126.162)</span></div>
<div class="c" style="left:1352px;top:407px;width:89px;height:14px;justify-content:flex-end;padding-right:5px;color:#000;font-size:10.2px"><span style="letter-spacing:-0.40px;margin-right:0.40px">-</span></div>
<div class="c" style="left:1778px;top:407px;width:72px;height:14px;justify-content:flex-end;padding-right:2px;color:#000;font-size:10.3px"><span style="letter-spacing:0.10px;margin-right:-0.10px">19/05/2025</span></div>
<div class="c" style="left:20px;top:422px;width:66px;height:14px;justify-content:flex-start;padding-left:2px;color:#000"><span style="letter-spacing:0.31px;margin-right:-0.31px">April-P1</span></div>
<div class="c" style="left:89px;top:422px;width:84px;height:14px;justify-content:flex-end;padding-right:2px;color:#000;font-size:10.2px"><span style="letter-spacing:0.30px;margin-right:-0.30px">32,00</span></div>
<div class="c" style="left:176px;top:422px;width:77px;height:14px;justify-content:flex-end;padding-right:2px;color:#000;font-size:10.2px"><span style="letter-spacing:0.30px;margin-right:-0.30px">137.121.460</span></div>
<div class="c" style="left:256px;top:422px;width:212px;height:14px;justify-content:flex-end;padding-right:2px;color:#000;font-size:10.2px"><span style="letter-spacing:0.30px;margin-right:-0.30px">78.082</span></div>
<div class="c" style="left:471px;top:422px;width:67px;height:14px;justify-content:flex-end;padding-right:2px;color:#000;font-size:10.2px"><span style="letter-spacing:0.33px;margin-right:-0.33px">11</span></div>
<div class="c" style="left:541px;top:422px;width:85px;height:14px;justify-content:flex-end;padding-right:2px;color:#000;font-size:10.2px"><span style="letter-spacing:0.30px;margin-right:-0.30px">98.838.364</span></div>
<div class="c" style="left:629px;top:422px;width:107px;height:14px;justify-content:flex-end;padding-right:2px;color:#000;font-size:10.2px"><span style="letter-spacing:0.22px;margin-right:-0.22px">-264.340</span></div>
<div class="c" style="left:739px;top:422px;width:137px;height:14px;justify-content:flex-end;padding-right:2px;color:#000;font-size:10.2px"><span style="letter-spacing:0.33px;margin-right:-0.33px">0</span></div>
<div class="c" style="left:879px;top:422px;width:137px;height:14px;justify-content:flex-end;padding-right:2px;color:#000;font-size:10.2px"><span style="letter-spacing:0.33px;margin-right:-0.33px">0</span></div>
<div class="c" style="left:1019px;top:422px;width:137px;height:14px;justify-content:flex-end;padding-right:2px;color:#000;font-size:10.2px"><span style="letter-spacing:0.33px;margin-right:-0.33px">0</span></div>
<div class="c" style="left:1159px;top:422px;width:108px;height:14px;justify-content:flex-end;padding-right:2px;color:#000;font-size:10.2px"><span style="letter-spacing:0.15px;margin-right:-0.15px">(186.258)</span></div>
<div class="c" style="left:1270px;top:422px;width:79px;height:14px;justify-content:flex-end;padding-right:2px;color:#000;font-size:10.2px"><span style="letter-spacing:0.13px;margin-right:-0.13px">(60.096)</span></div>
<div class="c" style="left:1352px;top:422px;width:89px;height:14px;justify-content:flex-end;padding-right:5px;color:#000;font-size:10.2px"><span style="letter-spacing:-0.40px;margin-right:0.40px">-</span></div>
<div class="c" style="left:1778px;top:422px;width:72px;height:14px;justify-content:flex-end;padding-right:2px;color:#000;font-size:10.3px"><span style="letter-spacing:0.10px;margin-right:-0.10px">31/01/2026</span></div>
<div class="c" style="left:20px;top:437px;width:66px;height:14px;justify-content:flex-start;padding-left:2px;color:#000"><span style="letter-spacing:0.25px;margin-right:-0.25px">MEI</span></div>
<div class="c" style="left:176px;top:437px;width:77px;height:14px;justify-content:flex-end;padding-right:2px;color:#000;font-size:10.2px"><span style="letter-spacing:0.30px;margin-right:-0.30px">239.250.372</span></div>
<div class="c" style="left:256px;top:437px;width:212px;height:14px;justify-content:flex-end;padding-right:2px;color:#000;font-size:10.2px"><span style="letter-spacing:0.30px;margin-right:-0.30px">193.038</span></div>
<div class="c" style="left:1159px;top:437px;width:104px;height:14px;justify-content:flex-end;padding-right:6px;color:#000;font-size:10.2px"><span style="letter-spacing:0.30px;margin-right:-0.30px">193.038</span></div>
<div class="c" style="left:1270px;top:437px;width:79px;height:14px;justify-content:flex-end;padding-right:2px;color:#000;font-size:10.2px"><span style="letter-spacing:0.15px;margin-right:-0.15px">(126.162)</span></div>
<div class="c" style="left:1352px;top:437px;width:88px;height:14px;justify-content:flex-end;padding-right:6px;color:#000;font-size:10.2px"><span style="letter-spacing:0.30px;margin-right:-0.30px">193.038</span></div>
<div class="c" style="left:1447px;top:437px;width:69px;height:14px;justify-content:flex-end;padding-right:6px;color:#000;font-size:10.2px"><span style="letter-spacing:0.30px;margin-right:-0.30px">66.876</span></div>
<div class="c" style="left:1523px;top:437px;width:64px;height:14px;justify-content:flex-end;padding-right:2px;color:#000;font-size:10.3px"><span style="letter-spacing:0.10px;margin-right:-0.10px">13/06/2025</span></div>
<div class="c" style="left:1590px;top:437px;width:185px;height:14px;justify-content:flex-start;padding-left:2px;color:#000;font-size:10.3px"><span style="letter-spacing:0.10px;margin-right:-0.10px">2FF6A683N6I3P3FJ</span></div>
<div class="c" style="left:1778px;top:437px;width:72px;height:14px;justify-content:flex-end;padding-right:2px;color:#000;font-size:10.3px"><span style="letter-spacing:0.10px;margin-right:-0.10px">13/06/2025</span></div>
<div class="c" style="left:20px;top:452px;width:66px;height:14px;justify-content:flex-start;padding-left:2px;color:#000"><span style="letter-spacing:0.55px;margin-right:-0.55px">Mei-P1</span></div>
<div class="c" style="left:89px;top:452px;width:84px;height:14px;justify-content:flex-end;padding-right:2px;color:#000;font-size:10.2px"><span style="letter-spacing:0.30px;margin-right:-0.30px">38,00</span></div>
<div class="c" style="left:176px;top:452px;width:77px;height:14px;justify-content:flex-end;padding-right:2px;color:#000;font-size:10.2px"><span style="letter-spacing:0.30px;margin-right:-0.30px">166.370.660</span></div>
<div class="c" style="left:256px;top:452px;width:212px;height:14px;justify-content:flex-end;padding-right:2px;color:#000;font-size:10.2px"><span style="letter-spacing:0.30px;margin-right:-0.30px">121.687</span></div>
<div class="c" style="left:471px;top:452px;width:67px;height:14px;justify-content:flex-end;padding-right:2px;color:#000;font-size:10.2px"><span style="letter-spacing:0.33px;margin-right:-0.33px">17</span></div>
<div class="c" style="left:541px;top:452px;width:85px;height:14px;justify-content:flex-end;padding-right:2px;color:#000;font-size:10.2px"><span style="letter-spacing:0.30px;margin-right:-0.30px">163.154.942</span></div>
<div class="c" style="left:629px;top:452px;width:107px;height:14px;justify-content:flex-end;padding-right:2px;color:#000;font-size:10.2px"><span style="letter-spacing:0.22px;margin-right:-0.22px">-183.794</span></div>
<div class="c" style="left:739px;top:452px;width:137px;height:14px;justify-content:flex-end;padding-right:2px;color:#000;font-size:10.2px"><span style="letter-spacing:0.33px;margin-right:-0.33px">0</span></div>
<div class="c" style="left:879px;top:452px;width:137px;height:14px;justify-content:flex-end;padding-right:2px;color:#000;font-size:10.2px"><span style="letter-spacing:0.33px;margin-right:-0.33px">0</span></div>
<div class="c" style="left:1019px;top:452px;width:137px;height:14px;justify-content:flex-end;padding-right:2px;color:#000;font-size:10.2px"><span style="letter-spacing:0.33px;margin-right:-0.33px">0</span></div>
<div class="c" style="left:1159px;top:452px;width:108px;height:14px;justify-content:flex-end;padding-right:2px;color:#000;font-size:10.2px"><span style="letter-spacing:0.15px;margin-right:-0.15px">(188.269)</span></div>
<div class="c" style="left:1270px;top:452px;width:79px;height:14px;justify-content:flex-end;padding-right:2px;color:#000;font-size:10.2px"><span style="letter-spacing:0.15px;margin-right:-0.15px">(255.145)</span></div>
<div class="c" style="left:1778px;top:452px;width:72px;height:14px;justify-content:flex-end;padding-right:2px;color:#000;font-size:10.3px"><span style="letter-spacing:0.10px;margin-right:-0.10px">31/01/2026</span></div>
<div class="c" style="left:20px;top:467px;width:66px;height:14px;justify-content:flex-start;padding-left:2px;color:#000"><span style="letter-spacing:-0.14px;margin-right:0.14px">JUNI</span></div>
<div class="c" style="left:176px;top:467px;width:77px;height:14px;justify-content:flex-end;padding-right:2px;color:#000;font-size:10.2px"><span style="letter-spacing:0.30px;margin-right:-0.30px">281.845.898</span></div>
<div class="c" style="left:256px;top:467px;width:212px;height:14px;justify-content:flex-end;padding-right:2px;color:#000;font-size:10.2px"><span style="letter-spacing:0.30px;margin-right:-0.30px">547.022</span></div>
<div class="c" style="left:1159px;top:467px;width:104px;height:14px;justify-content:flex-end;padding-right:6px;color:#000;font-size:10.2px"><span style="letter-spacing:0.30px;margin-right:-0.30px">547.022</span></div>
<div class="c" style="left:1270px;top:467px;width:76px;height:14px;justify-content:flex-end;padding-right:5px;color:#000;font-size:10.2px"><span style="letter-spacing:-0.40px;margin-right:0.40px">-</span></div>
<div class="c" style="left:1352px;top:467px;width:88px;height:14px;justify-content:flex-end;padding-right:6px;color:#000;font-size:10.2px"><span style="letter-spacing:0.30px;margin-right:-0.30px">547.022</span></div>
<div class="c" style="left:1447px;top:467px;width:69px;height:14px;justify-content:flex-end;padding-right:6px;color:#000;font-size:10.2px"><span style="letter-spacing:0.30px;margin-right:-0.30px">547.022</span></div>
<div class="c" style="left:1523px;top:467px;width:64px;height:14px;justify-content:flex-end;padding-right:2px;color:#000;font-size:10.3px"><span style="letter-spacing:0.10px;margin-right:-0.10px">15/07/2025</span></div>
<div class="c" style="left:1590px;top:467px;width:185px;height:14px;justify-content:flex-start;padding-left:2px;color:#000;font-size:10.3px"><span style="letter-spacing:0.10px;margin-right:-0.10px">B4CAE015AO2FJS2V</span></div>
<div class="c" style="left:1778px;top:467px;width:72px;height:14px;justify-content:flex-end;padding-right:2px;color:#000;font-size:10.3px"><span style="letter-spacing:0.10px;margin-right:-0.10px">15/07/2025</span></div>
<div class="c" style="left:20px;top:482px;width:66px;height:14px;justify-content:flex-start;padding-left:2px;color:#000"><span style="letter-spacing:0.16px;margin-right:-0.16px">Juni-P1</span></div>
<div class="c" style="left:89px;top:482px;width:84px;height:14px;justify-content:flex-end;padding-right:2px;color:#000;font-size:10.2px"><span style="letter-spacing:0.30px;margin-right:-0.30px">62,00</span></div>
<div class="c" style="left:176px;top:482px;width:77px;height:14px;justify-content:flex-end;padding-right:2px;color:#000;font-size:10.2px"><span style="letter-spacing:0.30px;margin-right:-0.30px">281.845.898</span></div>
<div class="c" style="left:256px;top:482px;width:212px;height:14px;justify-content:flex-end;padding-right:2px;color:#000;font-size:10.2px"><span style="letter-spacing:0.30px;margin-right:-0.30px">547.022</span></div>
<div class="c" style="left:471px;top:482px;width:67px;height:14px;justify-content:flex-end;padding-right:2px;color:#000;font-size:10.2px"><span style="letter-spacing:0.33px;margin-right:-0.33px">0</span></div>
<div class="c" style="left:541px;top:482px;width:85px;height:14px;justify-content:flex-end;padding-right:2px;color:#000;font-size:10.2px"><span style="letter-spacing:0.33px;margin-right:-0.33px">0</span></div>
<div class="c" style="left:629px;top:482px;width:107px;height:14px;justify-content:flex-end;padding-right:2px;color:#000;font-size:10.2px"><span style="letter-spacing:0.33px;margin-right:-0.33px">0</span></div>
<div class="c" style="left:739px;top:482px;width:137px;height:14px;justify-content:flex-end;padding-right:2px;color:#000;font-size:10.2px"><span style="letter-spacing:0.33px;margin-right:-0.33px">0</span></div>
<div class="c" style="left:879px;top:482px;width:137px;height:14px;justify-content:flex-end;padding-right:2px;color:#000;font-size:10.2px"><span style="letter-spacing:0.33px;margin-right:-0.33px">0</span></div>
<div class="c" style="left:1019px;top:482px;width:137px;height:14px;justify-content:flex-end;padding-right:2px;color:#000;font-size:10.2px"><span style="letter-spacing:0.33px;margin-right:-0.33px">0</span></div>
<div class="c" style="left:1159px;top:482px;width:104px;height:14px;justify-content:flex-end;padding-right:6px;color:#000;font-size:10.2px"><span style="letter-spacing:0.30px;margin-right:-0.30px">547.022</span></div>
<div class="c" style="left:1270px;top:482px;width:76px;height:14px;justify-content:flex-end;padding-right:5px;color:#000;font-size:10.2px"><span style="letter-spacing:-0.40px;margin-right:0.40px">-</span></div>
<div class="c" style="left:1778px;top:482px;width:72px;height:14px;justify-content:flex-end;padding-right:2px;color:#000;font-size:10.3px"><span style="letter-spacing:0.10px;margin-right:-0.10px">31/01/2026</span></div>
<div class="c" style="left:20px;top:497px;width:66px;height:14px;justify-content:flex-start;padding-left:2px;color:#000"><span style="letter-spacing:-0.24px;margin-right:0.24px">JULI</span></div>
<div class="c" style="left:176px;top:497px;width:77px;height:14px;justify-content:flex-end;padding-right:2px;color:#000;font-size:10.2px"><span style="letter-spacing:0.30px;margin-right:-0.30px">273.209.284</span></div>
<div class="c" style="left:256px;top:497px;width:212px;height:14px;justify-content:flex-end;padding-right:2px;color:#000;font-size:10.2px"><span style="letter-spacing:0.30px;margin-right:-0.30px">516.693</span></div>
<div class="c" style="left:1159px;top:497px;width:104px;height:14px;justify-content:flex-end;padding-right:6px;color:#000;font-size:10.2px"><span style="letter-spacing:0.30px;margin-right:-0.30px">516.693</span></div>
<div class="c" style="left:1270px;top:497px;width:76px;height:14px;justify-content:flex-end;padding-right:5px;color:#000;font-size:10.2px"><span style="letter-spacing:-0.40px;margin-right:0.40px">-</span></div>
<div class="c" style="left:1352px;top:497px;width:88px;height:14px;justify-content:flex-end;padding-right:6px;color:#000;font-size:10.2px"><span style="letter-spacing:0.30px;margin-right:-0.30px">516.693</span></div>
<div class="c" style="left:1447px;top:497px;width:69px;height:14px;justify-content:flex-end;padding-right:6px;color:#000;font-size:10.2px"><span style="letter-spacing:0.30px;margin-right:-0.30px">516.693</span></div>
<div class="c" style="left:1523px;top:497px;width:64px;height:14px;justify-content:flex-end;padding-right:2px;color:#000;font-size:10.3px"><span style="letter-spacing:0.10px;margin-right:-0.10px">15/08/2025</span></div>
<div class="c" style="left:1590px;top:497px;width:185px;height:14px;justify-content:flex-start;padding-left:2px;color:#000;font-size:10.3px"><span style="letter-spacing:0.10px;margin-right:-0.10px">5DB3C2MDTCLMSUH8</span></div>
<div class="c" style="left:1778px;top:497px;width:72px;height:14px;justify-content:flex-end;padding-right:2px;color:#000;font-size:10.3px"><span style="letter-spacing:0.10px;margin-right:-0.10px">15/08/2025</span></div>
<div class="c" style="left:20px;top:512px;width:66px;height:14px;justify-content:flex-start;padding-left:2px;color:#000"><span style="letter-spacing:0.19px;margin-right:-0.19px">Juli-P1</span></div>
<div class="c" style="left:89px;top:512px;width:84px;height:14px;justify-content:flex-end;padding-right:2px;color:#000;font-size:10.2px"><span style="letter-spacing:0.30px;margin-right:-0.30px">38,00</span></div>
<div class="c" style="left:176px;top:512px;width:77px;height:14px;justify-content:flex-end;padding-right:2px;color:#000;font-size:10.2px"><span style="letter-spacing:0.30px;margin-right:-0.30px">195.706.914</span></div>
<div class="c" style="left:256px;top:512px;width:212px;height:14px;justify-content:flex-end;padding-right:2px;color:#000;font-size:10.2px"><span style="letter-spacing:0.30px;margin-right:-0.30px">512.877</span></div>
<div class="c" style="left:471px;top:512px;width:67px;height:14px;justify-content:flex-end;padding-right:2px;color:#000;font-size:10.2px"><span style="letter-spacing:0.33px;margin-right:-0.33px">25</span></div>
<div class="c" style="left:541px;top:512px;width:85px;height:14px;justify-content:flex-end;padding-right:2px;color:#000;font-size:10.2px"><span style="letter-spacing:0.30px;margin-right:-0.30px">277.403.546</span></div>
<div class="c" style="left:629px;top:512px;width:107px;height:14px;justify-content:flex-end;padding-right:2px;color:#000;font-size:10.2px"><span style="letter-spacing:0.22px;margin-right:-0.22px">-354.118</span></div>
<div class="c" style="left:739px;top:512px;width:137px;height:14px;justify-content:flex-end;padding-right:2px;color:#000;font-size:10.2px"><span style="letter-spacing:0.33px;margin-right:-0.33px">0</span></div>
<div class="c" style="left:879px;top:512px;width:137px;height:14px;justify-content:flex-end;padding-right:2px;color:#000;font-size:10.2px"><span style="letter-spacing:0.33px;margin-right:-0.33px">0</span></div>
<div class="c" style="left:1019px;top:512px;width:137px;height:14px;justify-content:flex-end;padding-right:2px;color:#000;font-size:10.2px"><span style="letter-spacing:0.33px;margin-right:-0.33px">0</span></div>
<div class="c" style="left:1159px;top:512px;width:108px;height:14px;justify-content:flex-end;padding-right:2px;color:#000;font-size:10.2px"><span style="letter-spacing:0.15px;margin-right:-0.15px">(357.934)</span></div>
<div class="c" style="left:1778px;top:512px;width:72px;height:14px;justify-content:flex-end;padding-right:2px;color:#000;font-size:10.3px"><span style="letter-spacing:0.10px;margin-right:-0.10px">31/01/2026</span></div>
<div class="c" style="left:20px;top:527px;width:66px;height:14px;justify-content:flex-start;padding-left:2px;color:#000"><span style="letter-spacing:-0.70px;margin-right:0.70px">AGUSTUS</span></div>
<div class="c" style="left:176px;top:527px;width:77px;height:14px;justify-content:flex-end;padding-right:2px;color:#000;font-size:10.2px"><span style="letter-spacing:0.30px;margin-right:-0.30px">207.200.305</span></div>
<div class="c" style="left:256px;top:527px;width:212px;height:14px;justify-content:flex-end;padding-right:2px;color:#000;font-size:10.2px"><span style="letter-spacing:0.30px;margin-right:-0.30px">326.734</span></div>
<div class="c" style="left:1159px;top:527px;width:104px;height:14px;justify-content:flex-end;padding-right:6px;color:#000;font-size:10.2px"><span style="letter-spacing:0.30px;margin-right:-0.30px">326.734</span></div>
<div class="c" style="left:1270px;top:527px;width:79px;height:14px;justify-content:flex-end;padding-right:2px;color:#000;font-size:10.2px"><span style="letter-spacing:-0.16px;margin-right:0.16px">(0)</span></div>
<div class="c" style="left:1352px;top:527px;width:88px;height:14px;justify-content:flex-end;padding-right:6px;color:#000;font-size:10.2px"><span style="letter-spacing:0.30px;margin-right:-0.30px">326.734</span></div>
<div class="c" style="left:1447px;top:527px;width:69px;height:14px;justify-content:flex-end;padding-right:6px;color:#000;font-size:10.2px"><span style="letter-spacing:0.30px;margin-right:-0.30px">326.734</span></div>
<div class="c" style="left:1523px;top:527px;width:64px;height:14px;justify-content:flex-end;padding-right:2px;color:#000;font-size:10.3px"><span style="letter-spacing:0.10px;margin-right:-0.10px">15/09/2025</span></div>
<div class="c" style="left:1590px;top:527px;width:185px;height:14px;justify-content:flex-start;padding-left:2px;color:#000;font-size:10.3px"><span style="letter-spacing:0.10px;margin-right:-0.10px">4B5D55BME2BMADPU</span></div>
<div class="c" style="left:1778px;top:527px;width:72px;height:14px;justify-content:flex-end;padding-right:2px;color:#000;font-size:10.3px"><span style="letter-spacing:0.10px;margin-right:-0.10px">15/09/2025</span></div>
<div class="c" style="left:20px;top:542px;width:66px;height:14px;justify-content:flex-start;padding-left:2px;color:#000"><span style="letter-spacing:-0.01px;margin-right:0.01px">Agustus-P1</span></div>
<div class="c" style="left:89px;top:542px;width:84px;height:14px;justify-content:flex-end;padding-right:2px;color:#000;font-size:10.2px"><span style="letter-spacing:0.30px;margin-right:-0.30px">39,00</span></div>
<div class="c" style="left:176px;top:542px;width:77px;height:14px;justify-content:flex-end;padding-right:2px;color:#000;font-size:10.2px"><span style="letter-spacing:0.30px;margin-right:-0.30px">184.677.010</span></div>
<div class="c" style="left:256px;top:542px;width:212px;height:14px;justify-content:flex-end;padding-right:2px;color:#000;font-size:10.2px"><span style="letter-spacing:0.30px;margin-right:-0.30px">318.034</span></div>
<div class="c" style="left:471px;top:542px;width:67px;height:14px;justify-content:flex-end;padding-right:2px;color:#000;font-size:10.2px"><span style="letter-spacing:0.33px;margin-right:-0.33px">3</span></div>
<div class="c" style="left:541px;top:542px;width:85px;height:14px;justify-content:flex-end;padding-right:2px;color:#000;font-size:10.2px"><span style="letter-spacing:0.30px;margin-right:-0.30px">30.058.670</span></div>
<div class="c" style="left:629px;top:542px;width:107px;height:14px;justify-content:flex-end;padding-right:2px;color:#000;font-size:10.2px"><span style="letter-spacing:0.33px;margin-right:-0.33px">0</span></div>
<div class="c" style="left:739px;top:542px;width:137px;height:14px;justify-content:flex-end;padding-right:2px;color:#000;font-size:10.2px"><span style="letter-spacing:0.33px;margin-right:-0.33px">0</span></div>
<div class="c" style="left:879px;top:542px;width:137px;height:14px;justify-content:flex-end;padding-right:2px;color:#000;font-size:10.2px"><span style="letter-spacing:0.33px;margin-right:-0.33px">0</span></div>
<div class="c" style="left:1019px;top:542px;width:137px;height:14px;justify-content:flex-end;padding-right:2px;color:#000;font-size:10.2px"><span style="letter-spacing:0.33px;margin-right:-0.33px">0</span></div>
<div class="c" style="left:1159px;top:542px;width:108px;height:14px;justify-content:flex-end;padding-right:2px;color:#000;font-size:10.2px"><span style="letter-spacing:0.10px;margin-right:-0.10px">(8.700)</span></div>
<div class="c" style="left:1270px;top:542px;width:79px;height:14px;justify-content:flex-end;padding-right:2px;color:#000;font-size:10.2px"><span style="letter-spacing:0.10px;margin-right:-0.10px">(8.700)</span></div>
<div class="c" style="left:1778px;top:542px;width:72px;height:14px;justify-content:flex-end;padding-right:2px;color:#000;font-size:10.3px"><span style="letter-spacing:0.10px;margin-right:-0.10px">31/01/2026</span></div>
<div class="c" style="left:20px;top:557px;width:66px;height:14px;justify-content:flex-start;padding-left:2px;color:#000"><span style="letter-spacing:-0.76px;margin-right:0.76px">SEPTEMBER</span></div>
<div class="c" style="left:176px;top:557px;width:77px;height:14px;justify-content:flex-end;padding-right:2px;color:#000;font-size:10.2px"><span style="letter-spacing:0.30px;margin-right:-0.30px">201.454.109</span></div>
<div class="c" style="left:256px;top:557px;width:212px;height:14px;justify-content:flex-end;padding-right:2px;color:#000;font-size:10.2px"><span style="letter-spacing:0.30px;margin-right:-0.30px">265.628</span></div>
<div class="c" style="left:1159px;top:557px;width:104px;height:14px;justify-content:flex-end;padding-right:6px;color:#000;font-size:10.2px"><span style="letter-spacing:0.30px;margin-right:-0.30px">265.628</span></div>
<div class="c" style="left:1270px;top:557px;width:76px;height:14px;justify-content:flex-end;padding-right:5px;color:#000;font-size:10.2px"><span style="letter-spacing:-0.40px;margin-right:0.40px">-</span></div>
<div class="c" style="left:1352px;top:557px;width:88px;height:14px;justify-content:flex-end;padding-right:6px;color:#000;font-size:10.2px"><span style="letter-spacing:0.30px;margin-right:-0.30px">265.628</span></div>
<div class="c" style="left:1447px;top:557px;width:69px;height:14px;justify-content:flex-end;padding-right:6px;color:#000;font-size:10.2px"><span style="letter-spacing:0.30px;margin-right:-0.30px">265.628</span></div>
<div class="c" style="left:1523px;top:557px;width:64px;height:14px;justify-content:flex-end;padding-right:2px;color:#000;font-size:10.3px"><span style="letter-spacing:0.10px;margin-right:-0.10px">15/10/2025</span></div>
<div class="c" style="left:1590px;top:557px;width:185px;height:14px;justify-content:flex-start;padding-left:2px;color:#000;font-size:10.3px"><span style="letter-spacing:0.10px;margin-right:-0.10px">A61BA4F92F0RG16N</span></div>
<div class="c" style="left:1778px;top:557px;width:72px;height:14px;justify-content:flex-end;padding-right:2px;color:#000;font-size:10.3px"><span style="letter-spacing:0.10px;margin-right:-0.10px">15/10/2025</span></div>
<div class="c" style="left:20px;top:572px;width:66px;height:14px;justify-content:flex-start;padding-left:2px;color:#000"><span style="letter-spacing:0.37px;margin-right:-0.37px">September-P1</span></div>
<div class="c" style="left:89px;top:572px;width:84px;height:14px;justify-content:flex-end;padding-right:2px;color:#000;font-size:10.2px"><span style="letter-spacing:0.30px;margin-right:-0.30px">39,00</span></div>
<div class="c" style="left:176px;top:572px;width:77px;height:14px;justify-content:flex-end;padding-right:2px;color:#000;font-size:10.2px"><span style="letter-spacing:0.30px;margin-right:-0.30px">197.396.931</span></div>
<div class="c" style="left:256px;top:572px;width:212px;height:14px;justify-content:flex-end;padding-right:2px;color:#000;font-size:10.2px"><span style="letter-spacing:0.30px;margin-right:-0.30px">514.897</span></div>
<div class="c" style="left:471px;top:572px;width:67px;height:14px;justify-content:flex-end;padding-right:2px;color:#000;font-size:10.2px"><span style="letter-spacing:0.33px;margin-right:-0.33px">15</span></div>
<div class="c" style="left:541px;top:572px;width:85px;height:14px;justify-content:flex-end;padding-right:2px;color:#000;font-size:10.2px"><span style="letter-spacing:0.30px;margin-right:-0.30px">149.240.075</span></div>
<div class="c" style="left:629px;top:572px;width:107px;height:14px;justify-content:flex-end;padding-right:2px;color:#000;font-size:10.2px"><span style="letter-spacing:0.22px;margin-right:-0.22px">-249.269</span></div>
<div class="c" style="left:1159px;top:572px;width:104px;height:14px;justify-content:flex-end;padding-right:6px;color:#000;font-size:10.2px"><span style="letter-spacing:0.30px;margin-right:-0.30px">249.269</span></div>
<div class="c" style="left:20px;top:587px;width:66px;height:14px;justify-content:flex-start;padding-left:2px;color:#000"><span style="letter-spacing:-0.78px;margin-right:0.78px">OKTOBER</span></div>
<div class="c" style="left:176px;top:587px;width:77px;height:14px;justify-content:flex-end;padding-right:2px;color:#000;font-size:10.2px"><span style="letter-spacing:0.30px;margin-right:-0.30px">339.870.270</span></div>
<div class="c" style="left:256px;top:587px;width:212px;height:14px;justify-content:flex-end;padding-right:2px;color:#000;font-size:10.2px"><span style="letter-spacing:0.30px;margin-right:-0.30px">121.939</span></div>
<div class="c" style="left:1159px;top:587px;width:104px;height:14px;justify-content:flex-end;padding-right:6px;color:#000;font-size:10.2px"><span style="letter-spacing:0.30px;margin-right:-0.30px">121.939</span></div>
<div class="c" style="left:1270px;top:587px;width:76px;height:14px;justify-content:flex-end;padding-right:5px;color:#000;font-size:10.2px"><span style="letter-spacing:-0.40px;margin-right:0.40px">-</span></div>
<div class="c" style="left:1352px;top:587px;width:88px;height:14px;justify-content:flex-end;padding-right:6px;color:#000;font-size:10.2px"><span style="letter-spacing:0.30px;margin-right:-0.30px">121.939</span></div>
<div class="c" style="left:1447px;top:587px;width:69px;height:14px;justify-content:flex-end;padding-right:6px;color:#000;font-size:10.2px"><span style="letter-spacing:0.30px;margin-right:-0.30px">121.939</span></div>
<div class="c" style="left:1523px;top:587px;width:64px;height:14px;justify-content:flex-end;padding-right:2px;color:#000;font-size:10.3px"><span style="letter-spacing:0.10px;margin-right:-0.10px">14/11/2025</span></div>
<div class="c" style="left:1590px;top:587px;width:185px;height:14px;justify-content:flex-start;padding-left:2px;color:#000;font-size:10.3px"><span style="letter-spacing:0.10px;margin-right:-0.10px">883e7f5b-0e2f-4568-8cfc-753bd94fb0a1</span></div>
<div class="c" style="left:1778px;top:587px;width:72px;height:14px;justify-content:flex-end;padding-right:2px;color:#000;font-size:10.3px"><span style="letter-spacing:0.10px;margin-right:-0.10px">14/11/2025</span></div>
<div class="c" style="left:89px;top:602px;width:84px;height:14px;justify-content:flex-start;padding-left:2px;color:#000"><span style="letter-spacing:-0.18px;margin-right:0.18px">masa</span></div>
<div class="c" style="left:89px;top:617px;width:84px;height:14px;justify-content:flex-start;padding-left:2px;color:#000"><span style="letter-spacing:0.11px;margin-right:-0.11px">a1</span></div>
<div class="c" style="left:20px;top:632px;width:66px;height:14px;justify-content:flex-start;padding-left:2px;color:#000"><span style="letter-spacing:-0.44px;margin-right:0.44px">NOVEMBER</span></div>
<div class="c" style="left:176px;top:632px;width:77px;height:14px;justify-content:flex-end;padding-right:2px;color:#000;font-size:10.2px"><span style="letter-spacing:0.33px;margin-right:-0.33px">0</span></div>
<div class="c" style="left:256px;top:632px;width:212px;height:14px;justify-content:flex-end;padding-right:2px;color:#000;font-size:10.2px"><span style="letter-spacing:0.33px;margin-right:-0.33px">0</span></div>
<div class="c" style="left:1159px;top:632px;width:105px;height:14px;justify-content:flex-end;padding-right:5px;color:#000;font-size:10.2px"><span style="letter-spacing:-0.40px;margin-right:0.40px">-</span></div>
<div class="c" style="left:1270px;top:632px;width:76px;height:14px;justify-content:flex-end;padding-right:5px;color:#000;font-size:10.2px"><span style="letter-spacing:-0.40px;margin-right:0.40px">-</span></div>
<div class="c" style="left:1352px;top:632px;width:89px;height:14px;justify-content:flex-end;padding-right:5px;color:#000;font-size:10.2px"><span style="letter-spacing:-0.40px;margin-right:0.40px">-</span></div>
<div class="c" style="left:20px;top:647px;width:66px;height:14px;justify-content:flex-start;padding-left:2px;color:#000"><span style="letter-spacing:-0.68px;margin-right:0.68px">DESEMBER</span></div>
<div class="c" style="left:176px;top:647px;width:77px;height:14px;justify-content:flex-end;padding-right:2px;color:#000;font-size:10.2px"><span style="letter-spacing:0.33px;margin-right:-0.33px">0</span></div>
<div class="c" style="left:256px;top:647px;width:212px;height:14px;justify-content:flex-end;padding-right:2px;color:#000;font-size:10.2px"><span style="letter-spacing:0.33px;margin-right:-0.33px">0</span></div>
<div class="c" style="left:1159px;top:647px;width:105px;height:14px;justify-content:flex-end;padding-right:5px;color:#000;font-size:10.2px"><span style="letter-spacing:-0.40px;margin-right:0.40px">-</span></div>
<div class="c" style="left:1270px;top:647px;width:76px;height:14px;justify-content:flex-end;padding-right:5px;color:#000;font-size:10.2px"><span style="letter-spacing:-0.40px;margin-right:0.40px">-</span></div>
<div class="c" style="left:1352px;top:647px;width:89px;height:14px;justify-content:flex-end;padding-right:5px;color:#000;font-size:10.2px"><span style="letter-spacing:-0.40px;margin-right:0.40px">-</span></div>
<div style="position:absolute;left:1159px;top:511px;width:0;height:0;border-top:5px solid #1e7145;border-right:5px solid transparent"></div>
<div style="position:absolute;left:1159px;top:541px;width:0;height:0;border-top:5px solid #1e7145;border-right:5px solid transparent"></div>
<div style="position:absolute;left:1159px;top:571px;width:0;height:0;border-top:5px solid #1e7145;border-right:5px solid transparent"></div>
<div style="position:absolute;left:1157px;top:614px;width:114px;height:18px;border:2px solid #217346;box-sizing:border-box"></div>
<div style="position:absolute;left:1266px;top:627px;width:6px;height:6px;background:#217346;border:1px solid #fff"></div>
<div style="position:absolute;left:0;top:259px;width:1897px;height:13px;background:#0d0b0b"></div>
<div style="position:absolute;left:0;top:272px;width:20px;height:706px;background:#0d0b0b"></div>
<div class="ch" style="left:20px;width:69px">B</div>
<div style="position:absolute;left:88px;top:260px;width:1px;height:12px;background:#3a3a3a"></div>
<div class="ch" style="left:89px;width:87px">C</div>
<div style="position:absolute;left:175px;top:260px;width:1px;height:12px;background:#3a3a3a"></div>
<div class="ch" style="left:176px;width:80px">D</div>
<div style="position:absolute;left:255px;top:260px;width:1px;height:12px;background:#3a3a3a"></div>
<div class="ch" style="left:256px;width:215px">E</div>
<div style="position:absolute;left:470px;top:260px;width:1px;height:12px;background:#3a3a3a"></div>
<div class="ch" style="left:471px;width:70px">F</div>
<div style="position:absolute;left:540px;top:260px;width:1px;height:12px;background:#3a3a3a"></div>
<div class="ch" style="left:541px;width:88px">G</div>
<div style="position:absolute;left:628px;top:260px;width:1px;height:12px;background:#3a3a3a"></div>
<div class="ch" style="left:629px;width:110px">H</div>
<div style="position:absolute;left:738px;top:260px;width:1px;height:12px;background:#3a3a3a"></div>
<div class="ch" style="left:739px;width:140px">I</div>
<div style="position:absolute;left:878px;top:260px;width:1px;height:12px;background:#3a3a3a"></div>
<div class="ch" style="left:879px;width:140px">J</div>
<div style="position:absolute;left:1018px;top:260px;width:1px;height:12px;background:#3a3a3a"></div>
<div class="ch" style="left:1019px;width:140px">K</div>
<div style="position:absolute;left:1158px;top:260px;width:1px;height:12px;background:#3a3a3a"></div>
<div style="position:absolute;left:1159px;top:259px;width:110px;height:11px;background:#6a6a6a;border-bottom:2px solid #2a7144"></div>
<div class="ch" style="left:1159px;width:111px">L</div>
<div style="position:absolute;left:1269px;top:260px;width:1px;height:12px;background:#3a3a3a"></div>
<div class="ch" style="left:1270px;width:82px">M</div>
<div style="position:absolute;left:1351px;top:260px;width:1px;height:12px;background:#3a3a3a"></div>
<div class="ch" style="left:1352px;width:95px">N</div>
<div style="position:absolute;left:1446px;top:260px;width:1px;height:12px;background:#3a3a3a"></div>
<div class="ch" style="left:1447px;width:76px">O</div>
<div style="position:absolute;left:1522px;top:260px;width:1px;height:12px;background:#3a3a3a"></div>
<div class="ch" style="left:1523px;width:67px">P</div>
<div style="position:absolute;left:1589px;top:260px;width:1px;height:12px;background:#3a3a3a"></div>
<div class="ch" style="left:1590px;width:188px">Q</div>
<div style="position:absolute;left:1777px;top:260px;width:1px;height:12px;background:#3a3a3a"></div>
<div class="ch" style="left:1778px;width:75px">X</div>
<div style="position:absolute;left:1852px;top:260px;width:1px;height:12px;background:#3a3a3a"></div>
<div class="ch" style="left:1853px;width:44px">Y</div>
<div style="position:absolute;left:1896px;top:260px;width:1px;height:12px;background:#3a3a3a"></div>
<div style="position:absolute;left:1775px;top:260px;width:1px;height:12px;background:#3a3a3a"></div>
<div style="position:absolute;left:1158px;top:259px;width:1px;height:13px;background:#bdbdbd"></div>
<div style="position:absolute;left:1269px;top:259px;width:1px;height:13px;background:#bdbdbd"></div>
<div class="rh" style="top:273px;height:13px;line-height:15px;">1</div>
<div style="position:absolute;left:0;top:272px;width:19px;height:1px;background:#3a3a3a"></div>
<div class="rh" style="top:287px;height:14px;line-height:16px;">2</div>
<div style="position:absolute;left:0;top:286px;width:19px;height:1px;background:#3a3a3a"></div>
<div class="rh" style="top:302px;height:14px;line-height:16px;">3</div>
<div style="position:absolute;left:0;top:301px;width:19px;height:1px;background:#3a3a3a"></div>
<div class="rh" style="top:317px;height:14px;line-height:16px;">4</div>
<div style="position:absolute;left:0;top:316px;width:19px;height:1px;background:#3a3a3a"></div>
<div class="rh" style="top:332px;height:14px;line-height:16px;">5</div>
<div style="position:absolute;left:0;top:331px;width:19px;height:1px;background:#3a3a3a"></div>
<div class="rh" style="top:347px;height:14px;line-height:16px;">6</div>
<div style="position:absolute;left:0;top:346px;width:19px;height:1px;background:#3a3a3a"></div>
<div class="rh" style="top:362px;height:14px;line-height:16px;">7</div>
<div style="position:absolute;left:0;top:361px;width:19px;height:1px;background:#3a3a3a"></div>
<div class="rh" style="top:377px;height:14px;line-height:16px;">8</div>
<div style="position:absolute;left:0;top:376px;width:19px;height:1px;background:#3a3a3a"></div>
<div class="rh" style="top:392px;height:14px;line-height:16px;">9</div>
<div style="position:absolute;left:0;top:391px;width:19px;height:1px;background:#3a3a3a"></div>
<div class="rh" style="top:407px;height:14px;line-height:16px;">10</div>
<div style="position:absolute;left:0;top:406px;width:19px;height:1px;background:#3a3a3a"></div>
<div class="rh" style="top:422px;height:14px;line-height:16px;">11</div>
<div style="position:absolute;left:0;top:421px;width:19px;height:1px;background:#3a3a3a"></div>
<div class="rh" style="top:437px;height:14px;line-height:16px;">12</div>
<div style="position:absolute;left:0;top:436px;width:19px;height:1px;background:#3a3a3a"></div>
<div class="rh" style="top:452px;height:14px;line-height:16px;">13</div>
<div style="position:absolute;left:0;top:451px;width:19px;height:1px;background:#3a3a3a"></div>
<div class="rh" style="top:467px;height:14px;line-height:16px;">14</div>
<div style="position:absolute;left:0;top:466px;width:19px;height:1px;background:#3a3a3a"></div>
<div class="rh" style="top:482px;height:14px;line-height:16px;">15</div>
<div style="position:absolute;left:0;top:481px;width:19px;height:1px;background:#3a3a3a"></div>
<div class="rh" style="top:497px;height:14px;line-height:16px;">16</div>
<div style="position:absolute;left:0;top:496px;width:19px;height:1px;background:#3a3a3a"></div>
<div class="rh" style="top:512px;height:14px;line-height:16px;">17</div>
<div style="position:absolute;left:0;top:511px;width:19px;height:1px;background:#3a3a3a"></div>
<div class="rh" style="top:527px;height:14px;line-height:16px;">18</div>
<div style="position:absolute;left:0;top:526px;width:19px;height:1px;background:#3a3a3a"></div>
<div class="rh" style="top:542px;height:14px;line-height:16px;">19</div>
<div style="position:absolute;left:0;top:541px;width:19px;height:1px;background:#3a3a3a"></div>
<div class="rh" style="top:557px;height:14px;line-height:16px;">20</div>
<div style="position:absolute;left:0;top:556px;width:19px;height:1px;background:#3a3a3a"></div>
<div class="rh" style="top:572px;height:14px;line-height:16px;">21</div>
<div style="position:absolute;left:0;top:571px;width:19px;height:1px;background:#3a3a3a"></div>
<div class="rh" style="top:587px;height:14px;line-height:16px;">22</div>
<div style="position:absolute;left:0;top:586px;width:19px;height:1px;background:#3a3a3a"></div>
<div class="rh" style="top:602px;height:14px;line-height:16px;">23</div>
<div style="position:absolute;left:0;top:601px;width:19px;height:1px;background:#3a3a3a"></div>
<div class="rh" style="top:617px;height:14px;line-height:16px;background:#6b6b6b;">24</div>
<div style="position:absolute;left:0;top:616px;width:19px;height:1px;background:#3a3a3a"></div>
<div class="rh" style="top:632px;height:14px;line-height:16px;">25</div>
<div style="position:absolute;left:0;top:631px;width:19px;height:1px;background:#3a3a3a"></div>
<div class="rh" style="top:647px;height:14px;line-height:16px;">26</div>
<div style="position:absolute;left:0;top:646px;width:19px;height:1px;background:#3a3a3a"></div>
<div class="rh" style="top:662px;height:13px;line-height:15px;">27</div>
<div style="position:absolute;left:0;top:661px;width:19px;height:1px;background:#3a3a3a"></div>
<div class="rh" style="top:676px;height:13px;line-height:15px;">28</div>
<div style="position:absolute;left:0;top:675px;width:19px;height:1px;background:#3a3a3a"></div>
<div class="rh" style="top:690px;height:13px;line-height:15px;">29</div>
<div style="position:absolute;left:0;top:689px;width:19px;height:1px;background:#3a3a3a"></div>
<div class="rh" style="top:704px;height:13px;line-height:15px;">30</div>
<div style="position:absolute;left:0;top:703px;width:19px;height:1px;background:#3a3a3a"></div>
<div class="rh" style="top:718px;height:13px;line-height:15px;">31</div>
<div style="position:absolute;left:0;top:717px;width:19px;height:1px;background:#3a3a3a"></div>
<div class="rh" style="top:732px;height:13px;line-height:15px;">32</div>
<div style="position:absolute;left:0;top:731px;width:19px;height:1px;background:#3a3a3a"></div>
<div class="rh" style="top:746px;height:13px;line-height:15px;">33</div>
<div style="position:absolute;left:0;top:745px;width:19px;height:1px;background:#3a3a3a"></div>
<div class="rh" style="top:760px;height:13px;line-height:15px;">34</div>
<div style="position:absolute;left:0;top:759px;width:19px;height:1px;background:#3a3a3a"></div>
<div class="rh" style="top:774px;height:13px;line-height:15px;">35</div>
<div style="position:absolute;left:0;top:773px;width:19px;height:1px;background:#3a3a3a"></div>
<div class="rh" style="top:788px;height:13px;line-height:15px;">36</div>
<div style="position:absolute;left:0;top:787px;width:19px;height:1px;background:#3a3a3a"></div>
<div class="rh" style="top:802px;height:13px;line-height:15px;">37</div>
<div style="position:absolute;left:0;top:801px;width:19px;height:1px;background:#3a3a3a"></div>
<div class="rh" style="top:816px;height:13px;line-height:15px;">38</div>
<div style="position:absolute;left:0;top:815px;width:19px;height:1px;background:#3a3a3a"></div>
<div class="rh" style="top:830px;height:13px;line-height:15px;">39</div>
<div style="position:absolute;left:0;top:829px;width:19px;height:1px;background:#3a3a3a"></div>
<div class="rh" style="top:844px;height:13px;line-height:15px;">40</div>
<div style="position:absolute;left:0;top:843px;width:19px;height:1px;background:#3a3a3a"></div>
<div class="rh" style="top:858px;height:13px;line-height:15px;">41</div>
<div style="position:absolute;left:0;top:857px;width:19px;height:1px;background:#3a3a3a"></div>
<div class="rh" style="top:872px;height:13px;line-height:15px;">42</div>
<div style="position:absolute;left:0;top:871px;width:19px;height:1px;background:#3a3a3a"></div>
<div class="rh" style="top:886px;height:13px;line-height:15px;">43</div>
<div style="position:absolute;left:0;top:885px;width:19px;height:1px;background:#3a3a3a"></div>
<div class="rh" style="top:900px;height:13px;line-height:15px;">44</div>
<div style="position:absolute;left:0;top:899px;width:19px;height:1px;background:#3a3a3a"></div>
<div class="rh" style="top:914px;height:13px;line-height:15px;">45</div>
<div style="position:absolute;left:0;top:913px;width:19px;height:1px;background:#3a3a3a"></div>
<div class="rh" style="top:928px;height:13px;line-height:15px;">46</div>
<div style="position:absolute;left:0;top:927px;width:19px;height:1px;background:#3a3a3a"></div>
<div class="rh" style="top:942px;height:13px;line-height:15px;">47</div>
<div style="position:absolute;left:0;top:941px;width:19px;height:1px;background:#3a3a3a"></div>
<div class="rh" style="top:956px;height:13px;line-height:15px;">48</div>
<div style="position:absolute;left:0;top:955px;width:19px;height:1px;background:#3a3a3a"></div>
<div class="rh" style="top:970px;height:8px;line-height:15px;">49</div>
<div style="position:absolute;left:0;top:969px;width:19px;height:1px;background:#3a3a3a"></div>
<div style="position:absolute;left:19px;top:259px;width:1px;height:719px;background:#4a4a4a"></div>
<div style="position:absolute;left:0;top:616px;width:19px;height:1px;background:#bdbdbd"></div>
<div style="position:absolute;left:0;top:631px;width:19px;height:1px;background:#bdbdbd"></div>
<div style="position:absolute;left:18px;top:617px;width:2px;height:14px;background:#2a7144"></div>
<svg style="position:absolute;left:9px;top:262px" width="8" height="8"><path d="M7.5 0.5 V7.5 H0.5 Z" fill="#8a8a8a"/></svg>
<div style="position:absolute;left:0px;top:0px;width:1920px;height:259px;background:linear-gradient(90deg,#1d1614 0%,#1e1714 35%,#191515 60%,#141314 80%,#121314 100%)"></div>
<svg style="position:absolute;left:16px;top:16px" width="16" height="16" viewBox="0 0 16 16" fill="none"><rect x="3" y="0.5" width="12.5" height="15" rx="1.5" fill="#1f9a4a"/>
<rect x="3" y="0.5" width="12.5" height="5" rx="1" fill="#6fd66a"/>
<rect x="9" y="0.5" width="6.5" height="5" rx="1" fill="#b9e57a"/>
<rect x="9" y="5.5" width="6.5" height="5" fill="#169a3c"/>
<rect x="3" y="10.5" width="12.5" height="5" rx="1" fill="#0f7a34"/>
<rect x="0.5" y="3.5" width="8.5" height="9" rx="1" fill="#107c41"/>
<path d="M2.6 5.6 L6.8 10.6 M6.8 5.6 L2.6 10.6" stroke="#fff" stroke-width="1.4"/></svg>
<svg style="position:absolute;left:47px;top:16px" width="17" height="17" viewBox="0 0 17 17" fill="none"><path d="M1.5 1.5 H15.5 V15.5 H3.5 L1.5 13.5 Z" stroke="#e8e8e8" stroke-width="1.3"/>
<path d="M4.5 1.5 V6 H11.5 V1.5" stroke="#e8e8e8" stroke-width="1.3"/>
<path d="M4 15.5 V10 H13 V15.5" stroke="#e8e8e8" stroke-width="1.3"/></svg>
<svg style="position:absolute;left:77px;top:15px" width="16" height="18" viewBox="0 0 16 18" fill="none"><path d="M1.5 2 V7.5 H7" stroke="#e8e8e8" stroke-width="1.3" stroke-linecap="round" stroke-linejoin="round"/>
<path d="M2 7 C4 3 9 2 11.8 4.5 C15 7.5 14 12 8 17" stroke="#e8e8e8" stroke-width="1.3" stroke-linecap="round"/></svg>
<svg style="position:absolute;left:97.0px;top:21.0px" width="8" height="5.0" viewBox="0 0 8 5.0" fill="none"><path d="M1 1 L4.0 4.0 L7 1" stroke="#e0e0e0" stroke-width="1.2" stroke-linecap="round" stroke-linejoin="round"/></svg>
<svg style="position:absolute;left:116px;top:15px" width="16" height="18" viewBox="0 0 16 18" fill="none"><path d="M14.5 2 V7.5 H9" stroke="#555555" stroke-width="1.3" stroke-linecap="round" stroke-linejoin="round"/>
<path d="M14 7 C12 3 7 2 4.2 4.5 C1 7.5 2 12 8 17" stroke="#555555" stroke-width="1.3" stroke-linecap="round"/></svg>
<svg style="position:absolute;left:136.5px;top:21.0px" width="8" height="5.0" viewBox="0 0 8 5.0" fill="none"><path d="M1 1 L4.0 4.0 L7 1" stroke="#6a6a6a" stroke-width="1.2" stroke-linecap="round" stroke-linejoin="round"/></svg>
<svg style="position:absolute;left:157px;top:20px" width="10" height="9" viewBox="0 0 10 9" fill="none"><path d="M0.5 1 H9.5" stroke="#e0e0e0" stroke-width="1.2"/><path d="M1.5 4 L5 7.5 L8.5 4" stroke="#e0e0e0" stroke-width="1.2" stroke-linejoin="round"/></svg>
<div class="a" style="left:183px;top:18.6px;font-size:12.2px;line-height:12.2px;color:#f2f2f2;letter-spacing:-0.62px">Kertas Kerja Pajak TRINTY 2025</div>
<div style="position:absolute;left:349px;top:25px;width:5px;height:1.2px;background:#e8e8e8"></div>
<div class="a" style="left:360.5px;top:18.6px;font-size:12.2px;line-height:12.2px;color:#f2f2f2;letter-spacing:-0.1px">Excel</div>
<div style="position:absolute;left:784px;top:8px;width:366px;height:30px;border:1px solid #7f7b78;border-radius:5px;background:#1f1d1d"></div>
<svg style="position:absolute;left:797px;top:16px" width="16" height="16" viewBox="0 0 16 16" fill="none"><circle cx="9.5" cy="6.5" r="5" stroke="#d8d8d8" stroke-width="1.3"/><path d="M6 10 L1.5 14.5" stroke="#d8d8d8" stroke-width="1.4" stroke-linecap="round"/></svg>
<div class="a" style="left:826px;top:18.5px;font-size:12.5px;line-height:12.5px;color:#d6d6d6">Search</div>
<div style="position:absolute;left:1708px;top:14px;width:58px;height:19px;background:#fff;border-radius:1px"></div>
<div class="a" style="left:1719px;top:18.2px;font-size:12px;line-height:12px;color:#111">Sign in</div>
<div style="position:absolute;left:1795px;top:23px;width:11px;height:1px;background:#e8e8e8"></div>
<svg style="position:absolute;left:1842px;top:18px" width="12" height="12" viewBox="0 0 12 12" fill="none"><rect x="0.6" y="3" width="8.4" height="8.4" rx="1.2" stroke="#e8e8e8" stroke-width="1.1"/><path d="M3 0.8 H9.5 Q11.2 0.8 11.2 2.5 V9" stroke="#e8e8e8" stroke-width="1.1"/></svg>
<svg style="position:absolute;left:1889px;top:18px" width="13" height="13" viewBox="0 0 13 13" fill="none"><path d="M1 1 L12 12 M12 1 L1 12" stroke="#e8e8e8" stroke-width="1.2"/></svg>
<div class="a" style="left:22.0px;top:57.2px;font-size:13px;line-height:13px;color:#e6e6e6">File</div>
<div class="a" style="left:67.0px;top:57.2px;font-size:13px;line-height:13px;color:#ffffff;font-weight:700">Home</div>
<div class="a" style="left:123.5px;top:57.2px;font-size:13px;line-height:13px;color:#e6e6e6">Insert</div>
<div class="a" style="left:177.0px;top:57.2px;font-size:13px;line-height:13px;color:#e6e6e6">Draw</div>
<div class="a" style="left:228.5px;top:57.2px;font-size:13px;line-height:13px;color:#e6e6e6">Page Layout</div>
<div class="a" style="left:322.0px;top:57.2px;font-size:13px;line-height:13px;color:#e6e6e6">Formulas</div>
<div class="a" style="left:395.5px;top:57.2px;font-size:13px;line-height:13px;color:#e6e6e6">Data</div>
<div class="a" style="left:443.5px;top:57.2px;font-size:13px;line-height:13px;color:#e6e6e6">Review</div>
<div class="a" style="left:503.5px;top:57.2px;font-size:13px;line-height:13px;color:#e6e6e6">View</div>
<div class="a" style="left:550.5px;top:57.2px;font-size:13px;line-height:13px;color:#e6e6e6">Help</div>
<div class="a" style="left:598.5px;top:57.2px;font-size:13px;line-height:13px;color:#e6e6e6">Acrobat</div>
<div style="position:absolute;left:67px;top:72px;width:38px;height:3px;background:#52b17a;border-radius:2px"></div>
<div style="position:absolute;left:1837px;top:51px;width:71px;height:24px;background:#3aa35e;border-radius:4px"></div>
<svg style="position:absolute;left:1842px;top:56px" width="13" height="13" viewBox="0 0 13 13" fill="none"><path d="M1 5 V12 H11.5 V8" stroke="#1c1c1c" stroke-width="1.1"/><path d="M4 9 C4 6 6 4.5 9 4.5 H11.5 M9.5 2.2 L12 4.5 L9.5 6.8" stroke="#1c1c1c" stroke-width="1.1" stroke-linejoin="round"/></svg>
<div class="a" style="left:1858px;top:57.0px;font-size:12.5px;line-height:12.5px;color:#161616">Share</div>
<svg style="position:absolute;left:1896.0px;top:60.5px" width="8" height="5.0" viewBox="0 0 8 5.0" fill="none"><path d="M1 1 L4.0 4.0 L7 1" stroke="#1c1c1c" stroke-width="1.2" stroke-linecap="round" stroke-linejoin="round"/></svg>
<div style="position:absolute;left:8px;top:78px;width:1903px;height:100px;background:#292929;border-radius:8px"></div>
<svg style="position:absolute;left:29px;top:87px" width="30" height="33" viewBox="0 0 30 33" fill="none"><path d="M6 6 H3.5 V29 H14" stroke="#7a7a7a" stroke-width="2.2"/>
<path d="M9 6 V3.5 H12 Q13 0.8 15 0.8 Q17 0.8 18 3.5 H21 V6" stroke="#7a7a7a" stroke-width="1.8"/>
<rect x="8" y="5" width="14" height="3" fill="#7a7a7a"/>
<path d="M24 6 H26 V13" stroke="#7a7a7a" stroke-width="2"/>
<rect x="15.5" y="14" width="13" height="17.5" stroke="#7a7a7a" stroke-width="2"/></svg>
<div class="a" style="left:26px;top:123.2px;font-size:12px;line-height:12px;color:#7d7d7d">Paste</div>
<svg style="position:absolute;left:35.5px;top:142.25px" width="9" height="5.5" viewBox="0 0 9 5.5" fill="none"><path d="M1 1 L4.5 4.5 L8 1" stroke="#6a6a6a" stroke-width="1.2" stroke-linecap="round" stroke-linejoin="round"/></svg>
<svg style="position:absolute;left:70px;top:86px" width="12" height="17" viewBox="0 0 12 17" fill="none"><path d="M2 0.5 L8.5 11 M10 0.5 L3.5 11" stroke="#e0e0e0" stroke-width="1.1"/>
<circle cx="3.2" cy="13.5" r="2.4" stroke="#4aa3df" stroke-width="1.2"/><circle cx="8.8" cy="13.5" r="2.4" stroke="#4aa3df" stroke-width="1.2"/></svg>
<div class="a" style="left:88px;top:88.7px;font-size:12px;line-height:12px;color:#f0f0f0">Cut</div>
<svg style="position:absolute;left:67px;top:112px" width="18" height="17" viewBox="0 0 18 17" fill="none"><path d="M4 12.5 H0.8 V0.8 H6 L8 2.8" stroke="#e0e0e0" stroke-width="1.1"/>
<path d="M5 3.5 H11.5 L15.5 7.5 V16 H5 Z" stroke="#e0e0e0" stroke-width="1.1" stroke-linejoin="round"/><path d="M11 3.5 V8 H15.5" stroke="#e0e0e0" stroke-width="1.1"/>
<path d="M7.5 10.5 H13 M7.5 13 H13" stroke="#e0e0e0" stroke-width="1.1"/></svg>
<div class="a" style="left:88px;top:114.7px;font-size:12px;line-height:12px;color:#f0f0f0">Copy</div>
<svg style="position:absolute;left:132.0px;top:117.75px" width="9" height="5.5" viewBox="0 0 9 5.5" fill="none"><path d="M1 1 L4.5 4.5 L8 1" stroke="#e0e0e0" stroke-width="1.3" stroke-linecap="round" stroke-linejoin="round"/></svg>
<svg style="position:absolute;left:67px;top:137px" width="18" height="18" viewBox="0 0 18 18" fill="none"><path d="M10.5 6 L15.5 1 Q16.5 0.3 17.3 1.2 Q17.8 2 17 3 L12 8" stroke="#e0e0e0" stroke-width="1.2"/>
<path d="M9 5 L13 9 L7 16 Q4 14 1.5 11.5 L3 10 Z" fill="#e6c26e" stroke="#e0e0e0" stroke-width="1"/>
<path d="M2.5 12 L8 7" stroke="#222" stroke-width="0.8"/></svg>
<div class="a" style="left:88px;top:140.7px;font-size:12px;line-height:12px;color:#f0f0f0">Format Painter</div>
<div class="a" style="left:89.5px;top:162.2px;width:0;display:flex;justify-content:center;font-size:12px;line-height:12px;color:#e6e6e6"><span style="flex:none">Clipboard</span></div>
<svg style="position:absolute;left:170px;top:164px" width="10" height="10" viewBox="0 0 10 10" fill="none"><path d="M0.5 6 V0.5 H6" stroke="#d0d0d0" stroke-width="1"/><path d="M2.5 2.5 L9 9 M9 4.5 V9 H4.5" stroke="#d0d0d0" stroke-width="1"/></svg>
<div style="position:absolute;left:182px;top:84px;width:1px;height:89px;background:#4f4f4f"></div>
<div style="position:absolute;left:191px;top:90px;width:121px;height:22px;border:1px solid #6f6f6f;border-radius:4px;background:#232323"></div>
<div class="a" style="left:194px;top:95.7px;font-size:12px;line-height:12px;color:#f4f4f4">Calibri</div>
<svg style="position:absolute;left:303.0px;top:98.75px" width="9" height="5.5" viewBox="0 0 9 5.5" fill="none"><path d="M1 1 L4.5 4.5 L8 1" stroke="#e0e0e0" stroke-width="1.3" stroke-linecap="round" stroke-linejoin="round"/></svg>
<div style="position:absolute;left:316px;top:90px;width:41px;height:22px;border:1px solid #6f6f6f;border-radius:4px;background:#232323"></div>
<div class="a" style="left:319.5px;top:95.7px;font-size:12px;line-height:12px;color:#f4f4f4">12</div>
<svg style="position:absolute;left:347.5px;top:98.75px" width="9" height="5.5" viewBox="0 0 9 5.5" fill="none"><path d="M1 1 L4.5 4.5 L8 1" stroke="#e0e0e0" stroke-width="1.3" stroke-linecap="round" stroke-linejoin="round"/></svg>
<div class="a" style="left:366px;top:93.8px;font-size:15px;line-height:15px;color:#e8e8e8">A</div>
<svg style="position:absolute;left:378px;top:94px" width="7" height="5" viewBox="0 0 7 5" fill="none"><path d="M1 4 L3.5 1.2 L6 4" stroke="#4aa3df" stroke-width="1.1"/></svg>
<div class="a" style="left:393px;top:97.2px;font-size:12px;line-height:12px;color:#e8e8e8">A</div>
<svg style="position:absolute;left:402px;top:94px" width="7" height="5" viewBox="0 0 7 5" fill="none"><path d="M1 1 L3.5 3.8 L6 1" stroke="#4aa3df" stroke-width="1.1"/></svg>
<div class="a" style="left:198.5px;top:127.2px;font-size:13px;line-height:13px;color:#eaeaea;font-weight:700">B</div>
<div class="a" style="left:224.5px;top:127.2px;font-size:13px;line-height:13px;color:#eaeaea;font-style:italic;font-family:'Liberation Serif',serif">I</div>
<div class="a" style="left:249px;top:126.5px;font-size:12.5px;line-height:12.5px;color:#eaeaea">U</div>
<div style="position:absolute;left:249px;top:141px;width:10px;height:1px;background:#eaeaea"></div>
<svg style="position:absolute;left:268.5px;top:131.25px" width="9" height="5.5" viewBox="0 0 9 5.5" fill="none"><path d="M1 1 L4.5 4.5 L8 1" stroke="#e0e0e0" stroke-width="1.3" stroke-linecap="round" stroke-linejoin="round"/></svg>
<div style="position:absolute;left:284px;top:121px;width:1px;height:28px;background:#4f4f4f"></div>
<svg style="position:absolute;left:290px;top:125px" width="17" height="17" viewBox="0 0 17 17" fill="none"><path d="M1 1 H16 V16 M1 1 V16 M8.5 1 V16 M1 8.5 H16" stroke="#d8d8d8" stroke-width="1" stroke-dasharray="1.2 1.2"/><path d="M0.5 16 H16.5" stroke="#eaeaea" stroke-width="1.3"/></svg>
<svg style="position:absolute;left:312.5px;top:131.25px" width="9" height="5.5" viewBox="0 0 9 5.5" fill="none"><path d="M1 1 L4.5 4.5 L8 1" stroke="#e0e0e0" stroke-width="1.3" stroke-linecap="round" stroke-linejoin="round"/></svg>
<div style="position:absolute;left:328px;top:121px;width:1px;height:28px;background:#4f4f4f"></div>
<svg style="position:absolute;left:333px;top:124px" width="19" height="21" viewBox="0 0 19 21" fill="none"><path d="M4 9 L9 4 L14 9 L9.5 13.5 Z" stroke="#c9b6e8" stroke-width="1.1"/><path d="M9 4 L9 1.5 Q9 0.5 10 1 Q13 3 13.5 7" stroke="#e0e0e0" stroke-width="1"/><path d="M14 7 Q16.5 9 15.5 12" stroke="#a98be0" stroke-width="1.3"/>
<rect x="1" y="16" width="16" height="4" fill="#f5e71b"/></svg>
<svg style="position:absolute;left:356.5px;top:131.25px" width="9" height="5.5" viewBox="0 0 9 5.5" fill="none"><path d="M1 1 L4.5 4.5 L8 1" stroke="#e0e0e0" stroke-width="1.3" stroke-linecap="round" stroke-linejoin="round"/></svg>
<div class="a" style="left:376.5px;top:124.8px;font-size:14px;line-height:14px;color:#eaeaea">A</div>
<div style="position:absolute;left:376px;top:141px;width:16px;height:4px;background:#000"></div>
<svg style="position:absolute;left:397.5px;top:131.25px" width="9" height="5.5" viewBox="0 0 9 5.5" fill="none"><path d="M1 1 L4.5 4.5 L8 1" stroke="#e0e0e0" stroke-width="1.3" stroke-linecap="round" stroke-linejoin="round"/></svg>
<div class="a" style="left:293px;top:162.2px;width:0;display:flex;justify-content:center;font-size:12px;line-height:12px;color:#e6e6e6"><span style="flex:none">Font</span></div>
<svg style="position:absolute;left:406px;top:164px" width="10" height="10" viewBox="0 0 10 10" fill="none"><path d="M0.5 6 V0.5 H6" stroke="#d0d0d0" stroke-width="1"/><path d="M2.5 2.5 L9 9 M9 4.5 V9 H4.5" stroke="#d0d0d0" stroke-width="1"/></svg>
<div style="position:absolute;left:418px;top:84px;width:1px;height:89px;background:#4f4f4f"></div>
<svg style="position:absolute;left:432px;top:93px" width="15" height="11" viewBox="0 0 15 11" fill="none"><path d="M0.5 1 H14.5 M2.5 5 H12.5 M2.5 9 H12.5" stroke="#e0e0e0" stroke-width="1.1"/></svg>
<svg style="position:absolute;left:457px;top:96px" width="15" height="11" viewBox="0 0 15 11" fill="none"><path d="M2.5 1 H12.5 M0.5 5 H14.5 M2.5 9 H12.5" stroke="#e0e0e0" stroke-width="1.1"/></svg>
<div style="position:absolute;left:479px;top:90px;width:23px;height:22px;border:1px solid #8a8a8a;border-radius:4px;background:#3a3a3a"></div>
<svg style="position:absolute;left:483px;top:99px" width="15" height="11" viewBox="0 0 15 11" fill="none"><path d="M2.5 1 H12.5 M2.5 5 H12.5 M0.5 9 H14.5" stroke="#e8e8e8" stroke-width="1.1"/></svg>
<div style="position:absolute;left:506px;top:88px;width:1px;height:22px;background:#4f4f4f"></div>
<svg style="position:absolute;left:511px;top:93px" width="18" height="18" viewBox="0 0 18 18" fill="none"><text x="0" y="12" font-size="9" fill="#e0e0e0" transform="rotate(-45 5 8)" font-family="Liberation Sans">ab</text><path d="M6 16 L16 6 M12.5 5.5 H16.5 V9.5" stroke="#4aa3df" stroke-width="1.1"/></svg>
<svg style="position:absolute;left:532.5px;top:99.25px" width="9" height="5.5" viewBox="0 0 9 5.5" fill="none"><path d="M1 1 L4.5 4.5 L8 1" stroke="#e0e0e0" stroke-width="1.3" stroke-linecap="round" stroke-linejoin="round"/></svg>
<svg style="position:absolute;left:432px;top:127px" width="15" height="14" viewBox="0 0 15 14" fill="none"><path d="M0.5 1 H14.5 M0.5 4.8 H10 M0.5 8.6 H14.5 M0.5 12.4 H10" stroke="#e0e0e0" stroke-width="1.1"/></svg>
<svg style="position:absolute;left:458px;top:127px" width="15" height="14" viewBox="0 0 15 14" fill="none"><path d="M0.5 1 H14.5 M3 4.8 H12 M0.5 8.6 H14.5 M3 12.4 H12" stroke="#e0e0e0" stroke-width="1.1"/></svg>
<svg style="position:absolute;left:484px;top:127px" width="15" height="14" viewBox="0 0 15 14" fill="none"><path d="M0.5 1 H14.5 M5 4.8 H14.5 M0.5 8.6 H14.5 M5 12.4 H14.5" stroke="#e0e0e0" stroke-width="1.1"/></svg>
<div style="position:absolute;left:506px;top:121px;width:1px;height:28px;background:#4f4f4f"></div>
<svg style="position:absolute;left:512px;top:127px" width="16" height="14" viewBox="0 0 16 14" fill="none"><path d="M0.5 1 H15 M8 4.8 H15 M8 8.6 H15 M0.5 12.4 H15" stroke="#e0e0e0" stroke-width="1.1"/><path d="M6 6.7 H1 M3.2 4.5 L1 6.7 L3.2 8.9" stroke="#4aa3df" stroke-width="1.2"/></svg>
<svg style="position:absolute;left:537px;top:127px" width="16" height="14" viewBox="0 0 16 14" fill="none"><path d="M0.5 1 H15 M8 4.8 H15 M8 8.6 H15 M0.5 12.4 H15" stroke="#e0e0e0" stroke-width="1.1"/><path d="M0.5 6.7 H5.5 M3.3 4.5 L5.5 6.7 L3.3 8.9" stroke="#4aa3df" stroke-width="1.2"/></svg>
<div style="position:absolute;left:565px;top:88px;width:1px;height:64px;background:#4f4f4f"></div>
<svg style="position:absolute;left:576px;top:94px" width="16" height="16" viewBox="0 0 16 16" fill="none"><text x="0" y="7" font-size="8" fill="#e0e0e0" font-family="Liberation Sans">ab</text><text x="0" y="15" font-size="8" fill="#e0e0e0" font-family="Liberation Sans">c</text><path d="M14 8 Q15.5 12 11 12.5 H6.5 M8.5 10.3 L6.3 12.5 L8.5 14.7" stroke="#4aa3df" stroke-width="1.1"/></svg>
<div class="a" style="left:595px;top:96.7px;font-size:12px;line-height:12px;color:#f0f0f0">Wrap Text</div>
<svg style="position:absolute;left:574px;top:125px" width="17" height="17" viewBox="0 0 17 17" fill="none"><rect x="0.6" y="0.6" width="15.8" height="15.8" stroke="#4aa3df" stroke-width="1.2"/><path d="M0.6 4.5 H16.4 M0.6 12.5 H16.4 M5 0.6 V4.5 M12 0.6 V4.5 M5 12.5 V16.4 M12 12.5 V16.4" stroke="#4aa3df" stroke-width="1"/><path d="M3.5 8.5 H13.5 M5.5 6.5 L3.5 8.5 L5.5 10.5 M11.5 6.5 L13.5 8.5 L11.5 10.5" stroke="#e0e0e0" stroke-width="1"/></svg>
<div class="a" style="left:596px;top:128.2px;font-size:12px;line-height:12px;color:#f0f0f0">Merge &amp; Center</div>
<svg style="position:absolute;left:695.5px;top:131.25px" width="9" height="5.5" viewBox="0 0 9 5.5" fill="none"><path d="M1 1 L4.5 4.5 L8 1" stroke="#e0e0e0" stroke-width="1.3" stroke-linecap="round" stroke-linejoin="round"/></svg>
<div class="a" style="left:561px;top:162.2px;width:0;display:flex;justify-content:center;font-size:12px;line-height:12px;color:#e6e6e6"><span style="flex:none">Alignment</span></div>
<svg style="position:absolute;left:708px;top:164px" width="10" height="10" viewBox="0 0 10 10" fill="none"><path d="M0.5 6 V0.5 H6" stroke="#d0d0d0" stroke-width="1"/><path d="M2.5 2.5 L9 9 M9 4.5 V9 H4.5" stroke="#d0d0d0" stroke-width="1"/></svg>
<div style="position:absolute;left:720px;top:84px;width:1px;height:89px;background:#4f4f4f"></div>
<div style="position:absolute;left:729px;top:90px;width:145px;height:22px;border:1px solid #6f6f6f;border-radius:4px;background:#232323"></div>
<div class="a" style="left:732px;top:95.7px;font-size:12px;line-height:12px;color:#f4f4f4">Custom</div>
<svg style="position:absolute;left:863.5px;top:98.75px" width="9" height="5.5" viewBox="0 0 9 5.5" fill="none"><path d="M1 1 L4.5 4.5 L8 1" stroke="#e0e0e0" stroke-width="1.3" stroke-linecap="round" stroke-linejoin="round"/></svg>
<svg style="position:absolute;left:732px;top:126px" width="18" height="17" viewBox="0 0 18 17" fill="none"><rect x="0.6" y="0.6" width="15" height="10" stroke="#d8d8d8" stroke-width="1.1"/><text x="2" y="8.5" font-size="8" fill="#d8d8d8" font-family="Liberation Sans">cr</text>
<ellipse cx="12.5" cy="9" rx="4" ry="1.6" fill="#292929" stroke="#e8c96a" stroke-width="1.1"/><path d="M8.5 9 V14.5 Q12.5 16.8 16.5 14.5 V9 M8.5 11.8 Q12.5 14 16.5 11.8" stroke="#e8c96a" stroke-width="1.1"/></svg>
<svg style="position:absolute;left:754.5px;top:131.25px" width="9" height="5.5" viewBox="0 0 9 5.5" fill="none"><path d="M1 1 L4.5 4.5 L8 1" stroke="#e0e0e0" stroke-width="1.3" stroke-linecap="round" stroke-linejoin="round"/></svg>
<div class="a" style="left:774.5px;top:124.8px;font-size:18px;line-height:18px;color:#e6e6e6;letter-spacing:-0.5px">%</div>
<svg style="position:absolute;left:803px;top:127px" width="11" height="15" viewBox="0 0 11 15" fill="none"><circle cx="5.5" cy="5" r="3.6" fill="#e6e6e6"/><path d="M8.6 5.5 Q9 11 2.5 13.8" stroke="#e6e6e6" stroke-width="2" fill="none"/></svg>
<div style="position:absolute;left:822px;top:121px;width:1px;height:28px;background:#4f4f4f"></div>
<svg style="position:absolute;left:825px;top:124px" width="22" height="19" viewBox="0 0 22 19" fill="none"><path d="M10 7 H2 M4.8 4.2 L2 7 L4.8 9.8" stroke="#4aa3df" stroke-width="1.4"/><text x="13.5" y="9.5" font-size="9.8" fill="#e0e0e0" font-family="Liberation Sans">0</text><text x="5.5" y="17.5" font-size="9.8" fill="#e0e0e0" font-family="Liberation Sans">.00</text></svg>
<svg style="position:absolute;left:850px;top:124px" width="22" height="19" viewBox="0 0 22 19" fill="none"><text x="4.5" y="9.5" font-size="9.8" fill="#e0e0e0" font-family="Liberation Sans">.00</text><path d="M2 15 H10.5 M7.7 12.2 L10.5 15 L7.7 17.8" stroke="#4aa3df" stroke-width="1.4"/><text x="13.5" y="17.5" font-size="9.8" fill="#e0e0e0" font-family="Liberation Sans">0</text></svg>
<div class="a" style="left:793.5px;top:162.2px;width:0;display:flex;justify-content:center;font-size:12px;line-height:12px;color:#e6e6e6"><span style="flex:none">Number</span></div>
<svg style="position:absolute;left:871px;top:164px" width="10" height="10" viewBox="0 0 10 10" fill="none"><path d="M0.5 6 V0.5 H6" stroke="#d0d0d0" stroke-width="1"/><path d="M2.5 2.5 L9 9 M9 4.5 V9 H4.5" stroke="#d0d0d0" stroke-width="1"/></svg>
<div style="position:absolute;left:882px;top:84px;width:1px;height:89px;background:#4f4f4f"></div>
<svg style="position:absolute;left:913px;top:89px" width="30" height="24" viewBox="0 0 30 24" fill="none"><rect x="0.6" y="0.6" width="28" height="22" stroke="#d0d0d0" stroke-width="1.1"/>
<rect x="5" y="1" width="15" height="6.5" fill="#e02020"/><rect x="5" y="8" width="5" height="6.5" fill="#1f7ad0"/><rect x="10" y="8" width="10" height="6.5" fill="#292929"/><rect x="5" y="15" width="15" height="7.5" fill="#e02020"/>
<path d="M0.6 7.7 H28.6 M0.6 15 H28.6 M5 0.6 V22.6 M10 7.7 V15 M20 0.6 V22.6 M24.5 0.6 V22.6" stroke="#d0d0d0" stroke-width="1"/></svg>
<div class="a" style="left:927.5px;top:122.2px;width:0;display:flex;justify-content:center;font-size:12px;line-height:12px;color:#f0f0f0"><span style="flex:none">Conditional</span></div>
<div class="a" style="left:893px;top:138.2px;font-size:12px;line-height:12px;color:#f0f0f0">Formatting</div>
<svg style="position:absolute;left:953.5px;top:142.0px" width="8" height="5.0" viewBox="0 0 8 5.0" fill="none"><path d="M1 1 L4.0 4.0 L7 1" stroke="#e0e0e0" stroke-width="1.2" stroke-linecap="round" stroke-linejoin="round"/></svg>
<svg style="position:absolute;left:981px;top:89px" width="31" height="27" viewBox="0 0 31 27" fill="none"><rect x="0.6" y="0.6" width="28" height="21" stroke="#d0d0d0" stroke-width="1.1"/><rect x="10" y="7.5" width="18.5" height="14" fill="#1f7ad0"/>
<path d="M0.6 7.5 H28.6 M0.6 14.5 H28.6 M10 0.6 V21.6 M19.3 0.6 V21.6" stroke="#d0d0d0" stroke-width="1"/>
<path d="M29 5 L19 15.5" stroke="#d0d0d0" stroke-width="2.6" stroke-linecap="round"/><path d="M18.5 15 Q15 15.5 14 19 Q13 22 9.5 25.5 Q16 25.5 18.5 21.5 Q20 18 18.5 15 Z" fill="#3d8fe0"/></svg>
<div class="a" style="left:996px;top:122.2px;width:0;display:flex;justify-content:center;font-size:12px;line-height:12px;color:#f0f0f0"><span style="flex:none">Format as</span></div>
<div class="a" style="left:978px;top:138.2px;font-size:12px;line-height:12px;color:#f0f0f0">Table</div>
<svg style="position:absolute;left:1005.5px;top:142.0px" width="8" height="5.0" viewBox="0 0 8 5.0" fill="none"><path d="M1 1 L4.0 4.0 L7 1" stroke="#e0e0e0" stroke-width="1.2" stroke-linecap="round" stroke-linejoin="round"/></svg>
<div style="position:absolute;left:1028px;top:90px;width:237px;height:61px;border:1px solid #6a6a6a;border-radius:4px"></div>
<div style="position:absolute;left:1243px;top:90px;width:1px;height:62px;background:#6a6a6a"></div>
<div style="position:absolute;left:1033px;top:96px;width:100px;height:22px;background:#fff"></div>
<div class="a" style="left:1037px;top:102.0px;font-size:11.5px;line-height:11.5px;color:#1a1a1a">S4</div>
<div style="position:absolute;left:1139px;top:96px;width:100px;height:22px;background:#fff"></div>
<div class="a" style="left:1143px;top:104.2px;font-size:10px;line-height:10px;color:#1a1a1a">..</div>
<div style="position:absolute;left:1033px;top:124px;width:100px;height:22px;background:#fff"></div>
<div class="a" style="left:1036px;top:130.0px;font-size:11.5px;line-height:11.5px;color:#1a1a1a">S9</div>
<div style="position:absolute;left:1137px;top:122px;width:104px;height:26px;border:1px solid #8a8a8a;box-sizing:border-box"></div>
<div style="position:absolute;left:1139px;top:124px;width:100px;height:22px;background:#fff"></div>
<div class="a" style="left:1143px;top:128.7px;font-size:13px;line-height:13px;color:#1a1a1a">Normal</div>
<svg style="position:absolute;left:1249px;top:116px" width="10" height="9" viewBox="0 0 10 9" fill="none"><path d="M0.5 1 H9.5" stroke="#e0e0e0" stroke-width="1.2"/><path d="M1.5 4 L5 7.5 L8.5 4" stroke="#e0e0e0" stroke-width="1.2"/></svg>
<div class="a" style="left:1080px;top:162.2px;width:0;display:flex;justify-content:center;font-size:12px;line-height:12px;color:#e6e6e6"><span style="flex:none">Styles</span></div>
<div style="position:absolute;left:1278px;top:84px;width:1px;height:89px;background:#4f4f4f"></div>
<svg style="position:absolute;left:1291px;top:89px" width="33" height="24" viewBox="0 0 33 24" fill="none"><rect x="3" y="0.6" width="28" height="22" stroke="#d0d0d0" stroke-width="1.1"/><path d="M3 7.7 H31 M3 15 H31 M12.3 0.6 V22.6 M21.6 0.6 V22.6" stroke="#d0d0d0" stroke-width="1"/><rect x="8" y="8" width="24" height="6.5" fill="#1f7ad0"/>
<path d="M15 11.3 H1.5 M6 6.5 L1.2 11.3 L6 16" stroke="#4aa3df" stroke-width="1.4"/></svg>
<div class="a" style="left:1306.5px;top:122.7px;width:0;display:flex;justify-content:center;font-size:12px;line-height:12px;color:#f0f0f0"><span style="flex:none">Insert</span></div>
<svg style="position:absolute;left:1302.0px;top:142.5px" width="8" height="5.0" viewBox="0 0 8 5.0" fill="none"><path d="M1 1 L4.0 4.0 L7 1" stroke="#e0e0e0" stroke-width="1.2" stroke-linecap="round" stroke-linejoin="round"/></svg>
<svg style="position:absolute;left:1336px;top:89px" width="31" height="24" viewBox="0 0 31 24" fill="none"><rect x="0.6" y="0.6" width="28" height="22" stroke="#d0d0d0" stroke-width="1.1"/><path d="M0.6 7.7 H28.6 M0.6 15 H28.6 M10 0.6 V22.6 M19.3 0.6 V22.6" stroke="#d0d0d0" stroke-width="1"/><rect x="1" y="8" width="17" height="6.5" fill="#1f7ad0"/>
<path d="M19 5 L29 17 M29 5 L19 17" stroke="#e0405a" stroke-width="1.6"/></svg>
<div class="a" style="left:1350.5px;top:122.7px;width:0;display:flex;justify-content:center;font-size:12px;line-height:12px;color:#f0f0f0"><span style="flex:none">Delete</span></div>
<svg style="position:absolute;left:1346.0px;top:142.5px" width="8" height="5.0" viewBox="0 0 8 5.0" fill="none"><path d="M1 1 L4.0 4.0 L7 1" stroke="#e0e0e0" stroke-width="1.2" stroke-linecap="round" stroke-linejoin="round"/></svg>
<svg style="position:absolute;left:1380px;top:85px" width="30" height="28" viewBox="0 0 30 28" fill="none"><path d="M6 1 H24 M6 0 V2 M24 0 V2" stroke="#4aa3df" stroke-width="1"/><rect x="0.6" y="4.6" width="28" height="22" stroke="#d0d0d0" stroke-width="1.1"/><path d="M0.6 11.7 H28.6 M0.6 19 H28.6 M10 4.6 V26.6 M19.3 4.6 V26.6" stroke="#d0d0d0" stroke-width="1"/><rect x="6" y="12" width="18" height="6.5" fill="#1f7ad0"/></svg>
<div class="a" style="left:1395px;top:122.2px;width:0;display:flex;justify-content:center;font-size:12px;line-height:12px;color:#f0f0f0"><span style="flex:none">Format</span></div>
<svg style="position:absolute;left:1390.5px;top:142.0px" width="8" height="5.0" viewBox="0 0 8 5.0" fill="none"><path d="M1 1 L4.0 4.0 L7 1" stroke="#e0e0e0" stroke-width="1.2" stroke-linecap="round" stroke-linejoin="round"/></svg>
<div class="a" style="left:1351px;top:162.2px;width:0;display:flex;justify-content:center;font-size:12px;line-height:12px;color:#e6e6e6"><span style="flex:none">Cells</span></div>
<div style="position:absolute;left:1424px;top:84px;width:1px;height:89px;background:#4f4f4f"></div>
<svg style="position:absolute;left:1437px;top:87px" width="15" height="15" viewBox="0 0 15 15" fill="none"><path d="M14 3 V1 H1 L7.5 7.5 L1 14 H14 V12" stroke="#e0e0e0" stroke-width="1.1" stroke-linejoin="miter"/></svg>
<div class="a" style="left:1457px;top:88.7px;font-size:12px;line-height:12px;color:#f0f0f0">AutoSum</div>
<svg style="position:absolute;left:1523.0px;top:91.75px" width="9" height="5.5" viewBox="0 0 9 5.5" fill="none"><path d="M1 1 L4.5 4.5 L8 1" stroke="#e0e0e0" stroke-width="1.3" stroke-linecap="round" stroke-linejoin="round"/></svg>
<svg style="position:absolute;left:1436px;top:112px" width="18" height="16" viewBox="0 0 18 16" fill="none"><rect x="0.6" y="0.6" width="16" height="14" stroke="#e0e0e0" stroke-width="1.1"/><path d="M0.6 3.5 H16.6" stroke="#e0e0e0" stroke-width="1"/><path d="M8.6 5.5 V12.5 M5.5 9.5 L8.6 12.5 L11.7 9.5" stroke="#4aa3df" stroke-width="1.2"/></svg>
<div class="a" style="left:1457px;top:114.7px;font-size:12px;line-height:12px;color:#f0f0f0">Fill</div>
<svg style="position:absolute;left:1475.0px;top:118.0px" width="8" height="5.0" viewBox="0 0 8 5.0" fill="none"><path d="M1 1 L4.0 4.0 L7 1" stroke="#e0e0e0" stroke-width="1.2" stroke-linecap="round" stroke-linejoin="round"/></svg>
<svg style="position:absolute;left:1436px;top:138px" width="17" height="17" viewBox="0 0 17 17" fill="none"><path d="M1 10 L9 2 L15.5 8.5 L7.5 16.5 Z" stroke="#d0d0d0" stroke-width="1.1"/><path d="M1 10 L4.5 6.5 L11 13 L7.5 16.5 Z" fill="#c455d6" stroke="#c455d6" stroke-width="1"/></svg>
<div class="a" style="left:1457px;top:140.7px;font-size:12px;line-height:12px;color:#f0f0f0">Clear</div>
<svg style="position:absolute;left:1486.0px;top:144.5px" width="8" height="5.0" viewBox="0 0 8 5.0" fill="none"><path d="M1 1 L4.0 4.0 L7 1" stroke="#e0e0e0" stroke-width="1.2" stroke-linecap="round" stroke-linejoin="round"/></svg>
<svg style="position:absolute;left:1547px;top:87px" width="32" height="29" viewBox="0 0 32 29" fill="none"><text x="0" y="13" font-size="14" fill="#4aa3df" font-family="Liberation Sans">A</text><text x="0.5" y="27" font-size="13" fill="#e0e0e0" font-family="Liberation Sans">Z</text>
<path d="M13 4 H30 L24 11.5 V19 H19.5 V11.5 Z" stroke="#e0e0e0" stroke-width="1.2" stroke-linejoin="round"/></svg>
<div class="a" style="left:1562.5px;top:122.2px;width:0;display:flex;justify-content:center;font-size:12px;line-height:12px;color:#f0f0f0"><span style="flex:none">Sort &amp;</span></div>
<div class="a" style="left:1544.5px;top:138.2px;font-size:12px;line-height:12px;color:#f0f0f0">Filter</div>
<svg style="position:absolute;left:1572.5px;top:142.0px" width="8" height="5.0" viewBox="0 0 8 5.0" fill="none"><path d="M1 1 L4.0 4.0 L7 1" stroke="#e0e0e0" stroke-width="1.2" stroke-linecap="round" stroke-linejoin="round"/></svg>
<svg style="position:absolute;left:1593px;top:87px" width="31" height="30" viewBox="0 0 31 30" fill="none"><circle cx="19" cy="11" r="9.8" stroke="#e0e0e0" stroke-width="1.2"/><path d="M12 18 L1 29" stroke="#e0e0e0" stroke-width="1.3"/></svg>
<div class="a" style="left:1608px;top:122.2px;width:0;display:flex;justify-content:center;font-size:12px;line-height:12px;color:#f0f0f0"><span style="flex:none">Find &amp;</span></div>
<div class="a" style="left:1587.5px;top:138.2px;font-size:12px;line-height:12px;color:#f0f0f0">Select</div>
<svg style="position:absolute;left:1621.5px;top:142.0px" width="8" height="5.0" viewBox="0 0 8 5.0" fill="none"><path d="M1 1 L4.0 4.0 L7 1" stroke="#e0e0e0" stroke-width="1.2" stroke-linecap="round" stroke-linejoin="round"/></svg>
<div class="a" style="left:1532px;top:162.2px;width:0;display:flex;justify-content:center;font-size:12px;line-height:12px;color:#e6e6e6"><span style="flex:none">Editing</span></div>
<div style="position:absolute;left:1640px;top:84px;width:1px;height:89px;background:#4f4f4f"></div>
<svg style="position:absolute;left:1657px;top:87px" width="29" height="29" viewBox="0 0 29 29" fill="none"><rect x="1" y="1" width="27" height="27" stroke="#d0451b" stroke-width="1.4"/><rect x="3.5" y="3.5" width="22" height="22" stroke="#d0451b" stroke-width="1"/><path d="M14.5 3.5 V25.5 M3.5 14.5 H25.5" stroke="#d0451b" stroke-width="2.2"/></svg>
<div class="a" style="left:1671.5px;top:122.2px;width:0;display:flex;justify-content:center;font-size:12px;line-height:12px;color:#f0f0f0"><span style="flex:none">Add-ins</span></div>
<div class="a" style="left:1671.5px;top:162.2px;width:0;display:flex;justify-content:center;font-size:12px;line-height:12px;color:#e6e6e6"><span style="flex:none">Add-ins</span></div>
<div style="position:absolute;left:1703px;top:84px;width:1px;height:89px;background:#4f4f4f"></div>
<svg style="position:absolute;left:1748px;top:89px" width="25" height="27" viewBox="0 0 25 27" fill="none"><path d="M2 1.5 H10 L15 7 V16 M9.5 1.5 V7.5 H15" stroke="#1f7ad0" stroke-width="2" stroke-linejoin="round"/><path d="M2 1.5 V20.5 H9" stroke="#1f7ad0" stroke-width="2"/>
<path d="M11 17.5 V24.5 H23 V17.5 M17 22 V12 M14.5 14.5 L17 12 L19.5 14.5" stroke="#1f7ad0" stroke-width="2"/></svg>
<div class="a" style="left:1758.5px;top:122.2px;width:0;display:flex;justify-content:center;font-size:12px;line-height:12px;color:#f0f0f0"><span style="flex:none">Create and Share</span></div>
<div class="a" style="left:1758.5px;top:138.2px;width:0;display:flex;justify-content:center;font-size:12px;line-height:12px;color:#f0f0f0"><span style="flex:none">Adobe PDF</span></div>
<div class="a" style="left:1758.5px;top:162.2px;width:0;display:flex;justify-content:center;font-size:12px;line-height:12px;color:#e6e6e6"><span style="flex:none">Adobe Acrobat</span></div>
<div style="position:absolute;left:1813px;top:84px;width:1px;height:89px;background:#4f4f4f"></div>
<svg style="position:absolute;left:1891px;top:160px" width="13" height="8" viewBox="0 0 13 8" fill="none"><path d="M1 1 L6.5 6.5 L12 1" stroke="#e0e0e0" stroke-width="1.3"/></svg>
<div style="position:absolute;left:8px;top:186px;width:101px;height:25px;border:1px solid #6b6662;border-radius:4px;background:#211f1e"></div>
<div class="a" style="left:15.5px;top:193.7px;font-size:12px;line-height:12px;color:#f0f0f0">L24</div>
<svg style="position:absolute;left:93px;top:196px" width="12" height="8" viewBox="0 0 12 8" fill="none"><path d="M1 1.2 L6 6.2 L11 1.2" stroke="#e0e0e0" stroke-width="1.2"/></svg>
<div style="position:absolute;left:119px;top:193px;width:2.5px;height:2.5px;background:#e8e8e8;border-radius:50%"></div>
<div style="position:absolute;left:119px;top:198.5px;width:2.5px;height:2.5px;background:#e8e8e8;border-radius:50%"></div>
<div style="position:absolute;left:119px;top:204px;width:2.5px;height:2.5px;background:#e8e8e8;border-radius:50%"></div>
<div style="position:absolute;left:130px;top:186px;width:73px;height:25px;border:1px solid #6b6662;border-radius:4px;background:#211f1e"></div>
<svg style="position:absolute;left:136px;top:192px" width="14" height="14" viewBox="0 0 14 14" fill="none"><path d="M1.5 1.5 L12.5 12.5 M12.5 1.5 L1.5 12.5" stroke="#8a8a8a" stroke-width="1.1"/></svg>
<svg style="position:absolute;left:158px;top:192px" width="18" height="12" viewBox="0 0 18 12" fill="none"><path d="M1 5.5 L6 10.5 L17 0.8" stroke="#8a8a8a" stroke-width="1.1"/></svg>
<svg style="position:absolute;left:181px;top:189px" width="20" height="20" viewBox="0 0 20 20" fill="none"><text x="1" y="15.5" font-size="17" font-style="italic" fill="#f2f2f2" font-family="Liberation Serif">f</text><text x="8" y="14.5" font-size="12.5" font-style="italic" fill="#f2f2f2" font-family="Liberation Serif">x</text></svg>
<div style="position:absolute;left:208px;top:186px;width:1702px;height:64px;border:1px solid #5e5955;border-radius:6px;background:#292929"></div>
<svg style="position:absolute;left:1896px;top:192px" width="13" height="8" viewBox="0 0 13 8" fill="none"><path d="M1 7 L6.5 1.5 L12 7" stroke="#e0e0e0" stroke-width="1.3"/></svg>
<div style="position:absolute;left:1897px;top:259px;width:23px;height:719px;background:#100d0d"></div>
<svg style="position:absolute;left:1904px;top:264px" width="11" height="8" viewBox="0 0 11 8" fill="none"><path d="M5.5 0.5 L10.5 7.5 H0.5 Z" fill="#9a9a9a"/></svg>
<div style="position:absolute;left:1905px;top:276px;width:9px;height:672px;background:#9b9b9b;border-radius:5px"></div>
<svg style="position:absolute;left:1904px;top:969px" width="11" height="8" viewBox="0 0 11 8" fill="none"><path d="M0.5 0.5 H10.5 L5.5 7.5 Z" fill="#9a9a9a"/></svg>
<div style="position:absolute;left:0px;top:984px;width:1920px;height:25px;background:#0f0c0c"></div>
<div style="position:absolute;left:100px;top:978px;width:90px;height:8px;background:#fff"></div>
<div style="position:absolute;left:0px;top:978px;width:116px;height:12px;background:#0f0c0c;border-top-right-radius:6px"></div>
<div style="position:absolute;left:176px;top:978px;width:1744px;height:12px;background:#0f0c0c;border-top-left-radius:6px"></div>
<div style="position:absolute;left:116px;top:978px;width:60px;height:28px;background:linear-gradient(180deg,#ffffff 0%,#fefaf0 40%,#fdf0d8 100%);border-radius:0 0 6px 6px"></div>
<svg style="position:absolute;left:27px;top:988px" width="8" height="12" viewBox="0 0 8 12" fill="none"><path d="M6.5 1 L1.5 6 L6.5 11" stroke="#9a9a9a" stroke-width="1.3"/></svg>
<svg style="position:absolute;left:60px;top:988px" width="8" height="12" viewBox="0 0 8 12" fill="none"><path d="M1.5 1 L6.5 6 L1.5 11" stroke="#d8d8d8" stroke-width="1.3"/></svg>
<div class="a" style="left:124.5px;top:984.7px;font-size:13px;line-height:13px;color:#222;letter-spacing:-0.25px">PPH 21</div>
<div style="position:absolute;left:124px;top:1001px;width:44px;height:2px;background:#2e7d1f"></div>
<div style="position:absolute;left:180px;top:985px;width:1px;height:18px;background:#5a5a5a"></div>
<div class="a" style="left:194px;top:987.6px;font-size:13.2px;line-height:13.2px;color:#f0f0f0;letter-spacing:0.3px">Karyawan Tetap</div>
<div style="position:absolute;left:307px;top:985px;width:1px;height:18px;background:#5a5a5a"></div>
<div class="a" style="left:320px;top:987.6px;font-size:13.2px;line-height:13.2px;color:#f0f0f0;letter-spacing:0.22px">A1-Karyawan Resign</div>
<div style="position:absolute;left:460px;top:985px;width:1px;height:18px;background:#5a5a5a"></div>
<div class="a" style="left:475px;top:987.6px;font-size:13.2px;line-height:13.2px;color:#f0f0f0;letter-spacing:0.25px">Karyawan NIK Tidak Valid</div>
<div style="position:absolute;left:647px;top:985px;width:1px;height:18px;background:#5a5a5a"></div>
<div class="a" style="left:660px;top:987.6px;font-size:13.2px;line-height:13.2px;color:#f0f0f0">PPN</div>
<div style="position:absolute;left:699px;top:985px;width:1px;height:18px;background:#5a5a5a"></div>
<div class="a" style="left:711px;top:987.6px;font-size:13.2px;line-height:13.2px;color:#f0f0f0;letter-spacing:0.4px">A2</div>
<div style="position:absolute;left:741px;top:985px;width:1px;height:18px;background:#5a5a5a"></div>
<div class="a" style="left:756px;top:987.6px;font-size:13.2px;line-height:13.2px;color:#f0f0f0;letter-spacing:-0.28px">PREPAID PPH 23</div>
<div style="position:absolute;left:872px;top:985px;width:1px;height:18px;background:#5a5a5a"></div>
<div style="position:absolute;left:893px;top:991px;width:3px;height:3px;background:#e8e8e8"></div>
<div style="position:absolute;left:897.5px;top:991px;width:3px;height:3px;background:#e8e8e8"></div>
<div style="position:absolute;left:902px;top:991px;width:3px;height:3px;background:#e8e8e8"></div>
<svg style="position:absolute;left:924px;top:987px" width="13" height="13" viewBox="0 0 13 13" fill="none"><path d="M6.5 0.5 V12.5 M0.5 6.5 H12.5" stroke="#e8e8e8" stroke-width="1.1"/></svg>
<div style="position:absolute;left:962px;top:990px;width:2px;height:2px;background:#e8e8e8"></div>
<div style="position:absolute;left:962px;top:994px;width:2px;height:2px;background:#e8e8e8"></div>
<div style="position:absolute;left:962px;top:998px;width:2px;height:2px;background:#e8e8e8"></div>
<div style="position:absolute;left:980px;top:986px;width:920px;height:14px;background:#151212;border-radius:7px"></div>
<svg style="position:absolute;left:983px;top:988px" width="9" height="12" viewBox="0 0 9 12" fill="none"><path d="M8.5 0.5 V11.5 L0.5 6 Z" fill="#8f8f8f"/></svg>
<div style="position:absolute;left:1032px;top:989px;width:852px;height:9px;background:#9b9b9b;border-radius:5px"></div>
<svg style="position:absolute;left:1889px;top:988px" width="9" height="12" viewBox="0 0 9 12" fill="none"><path d="M0.5 0.5 V11.5 L8.5 6 Z" fill="#8f8f8f"/></svg>
<div style="position:absolute;left:0px;top:1009px;width:1920px;height:1px;background:#0f0c0c"></div>
<div style="position:absolute;left:0px;top:1010px;width:1920px;height:1px;background:#3a3636"></div>
<div style="position:absolute;left:0px;top:1011px;width:1920px;height:21px;background:#141212"></div>
<div class="a" style="left:11px;top:1016.4px;font-size:11.6px;line-height:11.6px;color:#e6e6e6;letter-spacing:-0.25px">Ready</div>
<div class="a" style="left:58px;top:1016.4px;font-size:11.6px;line-height:11.6px;color:#e6e6e6;letter-spacing:-0.2px">Calculate</div>
<svg style="position:absolute;left:124px;top:1013px" width="15" height="16" viewBox="0 0 15 16" fill="none"><circle cx="6.5" cy="2.5" r="1.8" stroke="#e0e0e0" stroke-width="1"/><path d="M1 5.5 Q6.5 7.5 12 5.5 M6.5 6.5 V10 L3.5 15 M6.5 10 L8 12" stroke="#e0e0e0" stroke-width="1.1"/><path d="M9 11 L14 15.5 M14 11 L9 15.5" stroke="#e0e0e0" stroke-width="1.1"/></svg>
<div class="a" style="left:143px;top:1016.0px;font-size:11.5px;line-height:11.5px;color:#f0f0f0;font-weight:700;letter-spacing:-0.45px">Accessibility: Investigate</div>
<div style="position:absolute;left:1620px;top:1011px;width:40px;height:21px;background:#262424"></div>
<svg style="position:absolute;left:1633px;top:1014px" width="14" height="14" viewBox="0 0 14 14" fill="none"><rect x="0.5" y="0.5" width="13" height="13" stroke="#f0f0f0" stroke-width="1"/><path d="M4.8 0.5 V13.5 M9.2 0.5 V13.5 M0.5 4.8 H13.5 M0.5 9.2 H13.5" stroke="#f0f0f0" stroke-width="1"/></svg>
<svg style="position:absolute;left:1673px;top:1014px" width="15" height="14" viewBox="0 0 15 14" fill="none"><rect x="0.5" y="0.5" width="14" height="13" stroke="#f0f0f0" stroke-width="1.1"/><rect x="3.5" y="3" width="8" height="8" stroke="#f0f0f0" stroke-width="1"/><path d="M5 5.5 H10 M5 7.5 H10" stroke="#f0f0f0" stroke-width="0.9"/></svg>
<svg style="position:absolute;left:1713px;top:1014px" width="15" height="14" viewBox="0 0 15 14" fill="none"><rect x="0.5" y="0.5" width="14" height="13" stroke="#f0f0f0" stroke-width="1.1"/><path d="M4 0.5 V6 H9 V0.5 M9 6 H14.5" stroke="#f0f0f0" stroke-width="1"/></svg>
<div style="position:absolute;left:1746px;top:1020px;width:9px;height:1.3px;background:#e8e8e8"></div>
<div style="position:absolute;left:1759px;top:1021px;width:100px;height:1px;background:#9a9a9a"></div>
<div style="position:absolute;left:1791px;top:1016px;width:5px;height:11px;background:#a8a8a8"></div>
<div style="position:absolute;left:1809px;top:1018px;width:1px;height:6px;background:#9a9a9a"></div>
<svg style="position:absolute;left:1863px;top:1015px" width="11" height="11" viewBox="0 0 11 11" fill="none"><path d="M5.5 0.5 V10.5 M0.5 5.5 H10.5" stroke="#e8e8e8" stroke-width="1.2"/></svg>
<div class="a" style="left:1885px;top:1015.7px;font-size:12px;line-height:12px;color:#f0f0f0;letter-spacing:-0.35px">70%</div>
<div style="position:absolute;left:0px;top:1032px;width:1920px;height:48px;background:linear-gradient(90deg,#1e1917 0%,#1f1b19 30%,#221c1a 55%,#1d1c1e 75%,#1f1e22 85%,#2a231b 95%,#2d2419 100%)"></div>
<div style="position:absolute;left:0px;top:1032px;width:1920px;height:1px;background:#2f2b29"></div>
<svg style="position:absolute;left:17px;top:1036px" width="32" height="32" viewBox="0 0 32 32" fill="none"><ellipse cx="13" cy="24" rx="11" ry="6" fill="#bcd3ef"/><circle cx="12" cy="19" r="5.5" fill="#cfe0f5"/><circle cx="18" cy="21" r="5" fill="#dae8f8"/><path d="M3 26 Q13 30 23 26" stroke="#8fb0dc" stroke-width="1"/>
<circle cx="21.5" cy="8.5" r="7.5" fill="#f08a8f"/><text x="18.5" y="13" font-size="10.5" fill="#2b1b1b" font-family="Liberation Sans">7</text></svg>
<div class="a" style="left:50px;top:1041.5px;font-size:11.5px;line-height:11.5px;color:#f0f0f0">30°C</div>
<div class="a" style="left:50px;top:1057.5px;font-size:11.5px;line-height:11.5px;color:#d8d8d8">Berawan</div>
<svg style="position:absolute;left:617px;top:1044px" width="24" height="24" viewBox="0 0 24 24" fill="none"><rect x="0" y="0" width="11.3" height="11.3" fill="#58c1f5"/><rect x="12.7" y="0" width="11.3" height="11.3" fill="#4db8f2"/><rect x="0" y="12.7" width="11.3" height="11.3" fill="#39a9ec"/><rect x="12.7" y="12.7" width="11.3" height="11.3" fill="#2b9de6"/></svg>
<div style="position:absolute;left:653px;top:1040px;width:220px;height:32px;background:#3d3432;border-radius:16px;border:0"></div>
<svg style="position:absolute;left:664px;top:1049px" width="16" height="16" viewBox="0 0 16 16" fill="none"><circle cx="6.8" cy="6.8" r="5.6" stroke="#e8e8e8" stroke-width="1.8"/><path d="M11 11 L15 15" stroke="#e8e8e8" stroke-width="2" stroke-linecap="round"/></svg>
<div class="a" style="left:690px;top:1049.7px;font-size:13px;line-height:13px;color:#d8d8d8">Search</div>
<svg style="position:absolute;left:823px;top:1042px" width="45" height="28" viewBox="0 0 45 28" fill="none"><ellipse cx="23" cy="23.5" rx="21" ry="3.5" fill="#d9c59a"/><path d="M12 9 Q11 4 7 3 L5 6 Q3 8 2 10 L5 11 L8 10 L10 16 L9 22 L11 22 L12 16 Q20 17 27 15 L29 22 L31 22 L31 14 Q33 10 30 8 Z" fill="#b5a8d8"/><path d="M14 9 L16 15 M18 9 L20 15 M22 9 L24 15 M26 9 L28 14" stroke="#5b4a8a" stroke-width="1"/></svg>
<svg style="position:absolute;left:885px;top:1044px" width="26" height="24" viewBox="0 0 26 24" fill="none"><rect x="1" y="9" width="15" height="14" rx="1.5" fill="#7a7a7a"/><rect x="9" y="1" width="16" height="15" rx="1.5" fill="#e8e8e8"/><rect x="9" y="9" width="7" height="7" fill="#b5b5b5"/></svg>
<svg style="position:absolute;left:929px;top:1045px" width="25" height="22" viewBox="0 0 25 22" fill="none"><path d="M0.5 3 Q0.5 1 2.5 1 H9 L11 3.5 H22.5 Q24.5 3.5 24.5 5.5 V19.5 Q24.5 21.5 22.5 21.5 H2.5 Q0.5 21.5 0.5 19.5 Z" fill="#f4c542"/><rect x="0.5" y="6" width="24" height="15.5" rx="1.5" fill="#ffd65a"/><rect x="7" y="14" width="11" height="7" rx="1" fill="#1a78d4"/></svg>
<div style="position:absolute;left:937px;top:1073px;width:8px;height:3px;background:#8a8a8a;border-radius:2px"></div>
<svg style="position:absolute;left:973px;top:1044px" width="25" height="25" viewBox="0 0 25 25" fill="none"><circle cx="12.5" cy="12.5" r="12" fill="#1f8fe3"/><path d="M24.5 13 Q24 4 15 2 Q22 5 21 11 Q19 15 14 15 Q9 15 9 11 Q6 20 15 24 Q23 22 24.5 13 Z" fill="#3ccf7a"/><path d="M2 16 Q4 22 12 24.5 Q5 19 9 11 Q10 7 15 6 Q8 4 3 9 Q1 12 2 16 Z" fill="#0c59a4"/></svg>
<svg style="position:absolute;left:1017px;top:1044px" width="24" height="24" viewBox="0 0 24 24" fill="none"><path d="M6 5 V3 Q6 1 8 1 H16 Q18 1 18 3 V5" stroke="#37a0e8" stroke-width="1.6"/><rect x="0.5" y="5" width="23" height="18.5" rx="2.5" fill="#f3f3f3"/><rect x="7" y="9" width="4.5" height="4.5" fill="#f25022"/><rect x="12.5" y="9" width="4.5" height="4.5" fill="#7fba00"/><rect x="7" y="14.5" width="4.5" height="4.5" fill="#00a4ef"/><rect x="12.5" y="14.5" width="4.5" height="4.5" fill="#ffb900"/></svg>
<svg style="position:absolute;left:1060px;top:1043px" width="26" height="26" viewBox="0 0 26 26" fill="none"><path d="M13 1.5 A11.5 11.5 0 1 1 4 21 L1.5 24.5 L3 19.5 A11.5 11.5 0 0 1 13 1.5 Z" stroke="#3ec15a" stroke-width="2.4" fill="none"/><path d="M8.5 8 Q8 10 10 13.5 Q13 17 16 17.5 Q17.5 17.5 18 16 L16 14.5 L14.5 15.5 Q12 14.5 10.5 11.5 L11.5 10 L10 7.5 Q9 7.5 8.5 8 Z" fill="#3ec15a"/></svg>
<svg style="position:absolute;left:1105px;top:1044px" width="25" height="25" viewBox="0 0 25 25" fill="none"><circle cx="12.5" cy="12.5" r="12" fill="#db4437"/><path d="M12.5 12.5 L2.1 6.5 A12 12 0 0 0 6.5 22.9 Z" fill="#0f9d58"/><path d="M12.5 12.5 L6.5 22.9 A12 12 0 0 0 24.5 12.5 L24.5 12.5 Z" fill="#ffcd40"/><path d="M12.5 12.5 L24.5 12.5 A12 12 0 0 0 22.9 6.5 L2.1 6.5 Z" fill="#db4437"/><circle cx="12.5" cy="12.5" r="5.5" fill="#fff"/><circle cx="12.5" cy="12.5" r="4.3" fill="#4285f4"/></svg>
<div style="position:absolute;left:1112px;top:1073px;width:8px;height:3px;background:#8a8a8a;border-radius:2px"></div>
<svg style="position:absolute;left:1149px;top:1044px" width="25" height="25" viewBox="0 0 25 25" fill="none"><circle cx="12.5" cy="12.5" r="12" fill="#e84a5f"/><path d="M6.5 19 L12.5 5.5 L18.5 19" stroke="#fff" stroke-width="2.6" stroke-linejoin="round"/></svg>
<svg style="position:absolute;left:1193px;top:1044px" width="25" height="25" viewBox="0 0 25 25" fill="none"><rect x="0" y="0" width="25" height="25" fill="#ef443b"/><path d="M5 12.5 L9.5 8 L14 12.5 L9.5 17 Z" fill="#fff"/><path d="M13 8 L17.5 12.5 L13 17" stroke="#fff" stroke-width="2" fill="none"/></svg>
<div style="position:absolute;left:1228px;top:1036px;width:38px;height:39px;background:#2b2827;border-radius:5px;border:1px solid #353130;box-sizing:border-box"></div>
<svg style="position:absolute;left:1236px;top:1044px" width="24" height="24" viewBox="0 0 24 24" fill="none"><rect x="5" y="1" width="18" height="22" rx="2" fill="#21a366"/><rect x="5" y="1" width="18" height="7.5" rx="1.5" fill="#33c481"/><rect x="14" y="8.5" width="9" height="7" fill="#107c41"/><rect x="5" y="15.5" width="18" height="7.5" rx="1.5" fill="#185c37"/><rect x="0.5" y="9" width="11" height="11" rx="1.5" fill="#107c41"/><path d="M3.5 11.5 L8.5 17.5 M8.5 11.5 L3.5 17.5" stroke="#fff" stroke-width="1.6"/></svg>
<div style="position:absolute;left:1240px;top:1072px;width:16px;height:3px;background:#4cc2ff;border-radius:2px"></div>
<svg style="position:absolute;left:1281px;top:1043px" width="24" height="26" viewBox="0 0 24 26" fill="none"><path d="M1 2 H16 L20 6 V24 H1 Z" fill="#f2f2f2"/><rect x="1.5" y="7" width="18" height="17" fill="#c7e36a"/><path d="M1.5 22 L6 14 L10 18 L15 9 L19.5 15 V24 H1.5 Z" fill="#65a832"/><path d="M5 8 V19 M5 12 H13" stroke="#222" stroke-width="1.1"/><path d="M14 18 L22.5 3" stroke="#e8b830" stroke-width="2"/></svg>
<div style="position:absolute;left:1289px;top:1073px;width:8px;height:3px;background:#8a8a8a;border-radius:2px"></div>
<svg style="position:absolute;left:1695px;top:1051px" width="13" height="8" viewBox="0 0 13 8" fill="none"><path d="M1 7 L6.5 1.5 L12 7" stroke="#f0f0f0" stroke-width="1.4"/></svg>
<svg style="position:absolute;left:1724px;top:1047px" width="20" height="18" viewBox="0 0 20 18" fill="none"><path d="M4 15 Q0.5 15 0.5 11.5 Q0.5 8 4 8 Q5 3 10 3 Q14.5 3 15.5 7.5 Q19.5 8 19.5 11.5 Q19.5 15 16 15 Z" fill="#8a8a8a"/><path d="M2 1 L18 17.5" stroke="#d8d8d8" stroke-width="1.3"/></svg>
<svg style="position:absolute;left:1758px;top:1047px" width="18" height="19" viewBox="0 0 18 19" fill="none"><rect x="0.6" y="1" width="12" height="10.5" stroke="#f0f0f0" stroke-width="1.1"/><path d="M4 14.5 H10 M7 11.5 V14.5" stroke="#f0f0f0" stroke-width="1.1"/><rect x="12" y="0.6" width="4.5" height="6" rx="1" stroke="#f0f0f0" stroke-width="1"/><path d="M14.2 6.6 V18" stroke="#f0f0f0" stroke-width="1.1"/></svg>
<svg style="position:absolute;left:1781px;top:1049px" width="18" height="15" viewBox="0 0 18 15" fill="none"><path d="M1 5 H4 L8.5 1 V14 L4 10 H1 Z" stroke="#f0f0f0" stroke-width="1.1" stroke-linejoin="round"/><path d="M11 5 Q12.5 7.5 11 10 M13.5 3 Q16.5 7.5 13.5 12 M15.5 1 Q19.5 7.5 15.5 14" stroke="#f0f0f0" stroke-width="1.1"/></svg>
<div class="a" style="left:1848px;top:1042.5px;font-size:11.5px;line-height:11.5px;color:#f4f4f4">14:00</div>
<div class="a" style="left:1815.5px;top:1058.0px;font-size:11.5px;line-height:11.5px;color:#f4f4f4">31/01/2026</div>
<svg style="position:absolute;left:1884px;top:1048px" width="16" height="17" viewBox="0 0 16 17" fill="none"><path d="M2.5 12.5 V7.5 Q2.5 2 8 2 Q13.5 2 13.5 7.5 V12.5 L15 14 H1 Z" stroke="#f0f0f0" stroke-width="1.1" stroke-linejoin="round"/><path d="M6 15.5 Q8 17.5 10 15.5" stroke="#f0f0f0" stroke-width="1.1"/></svg>
</body></html>
